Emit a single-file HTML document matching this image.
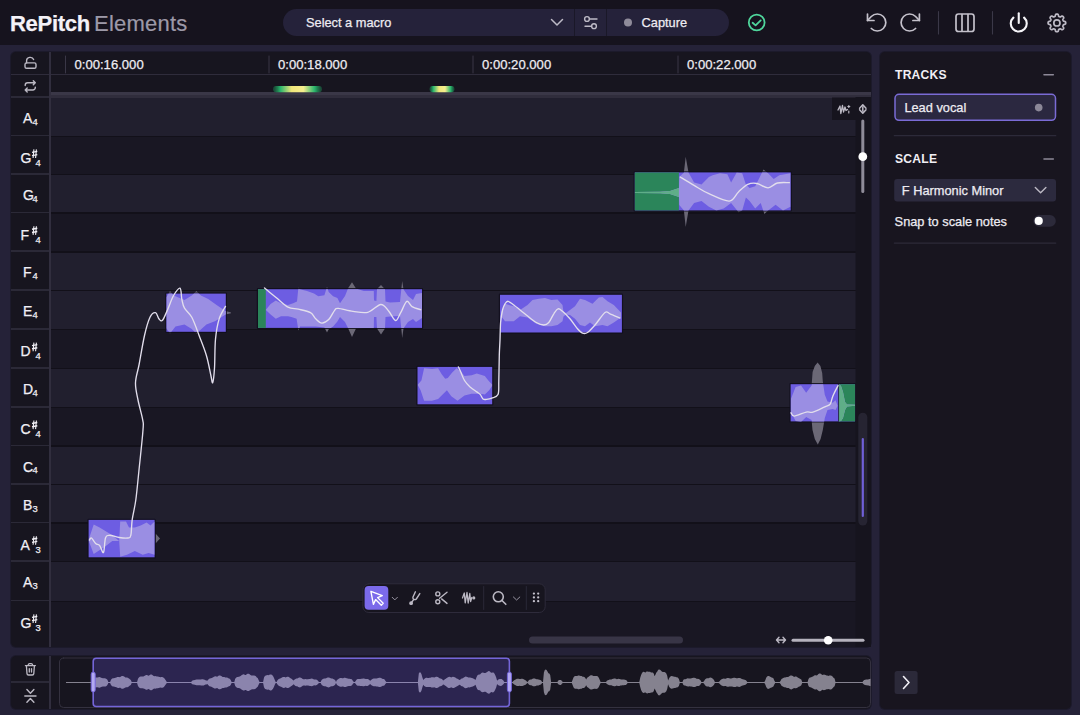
<!DOCTYPE html><html><head><meta charset="utf-8"><style>*{margin:0;padding:0;box-sizing:border-box}
html,body{width:1080px;height:715px;overflow:hidden;background:#252238;font-family:"Liberation Sans",sans-serif;color:#ece9f3}
div{-webkit-text-stroke:0.25px currentColor}
.a{position:absolute}
#hdr{left:0;top:0;width:1080px;height:45px;background:#16131e}
#logo{left:10px;top:10.5px;font-size:22px;line-height:26px;white-space:nowrap;letter-spacing:-0.3px}
#logo b{color:#f4f2f8}
#logo span{color:#9d99a8;font-weight:normal;letter-spacing:0.3px}
#pill{left:283px;top:9px;width:446px;height:27px;background:#25223a;border-radius:14px}
.t125{font-size:12.8px;line-height:14px;white-space:nowrap}
.key{position:absolute;left:0;width:38px;color:#f1eff5;font-size:13.5px;line-height:14px;white-space:nowrap}
.key i{font-style:normal;position:absolute}
.lbl{color:#f1eff5;line-height:18px;white-space:nowrap;-webkit-text-stroke:0.25px #f1eff5}
.tl{position:absolute;top:58px;font-size:13.1px;line-height:14px;color:#efedf3;white-space:nowrap}
</style></head><body>
<div id="hdr" class="a">
  <div id="logo" class="a"><b>RePitch</b></div><div class="a" style="left:94px;top:10.5px;font-size:22px;line-height:26px;white-space:nowrap;color:#9d99a8;letter-spacing:0.22px;-webkit-text-stroke:0.2px #9d99a8">Elements</div>
  <div id="pill" class="a"></div>
  <div class="a t125" style="left:306px;top:16px;color:#eeecf2">Select a macro</div>
  <div class="a" style="left:574px;top:9px;width:1px;height:27px;background:#1a1828"></div>
  <div class="a" style="left:606px;top:9px;width:1px;height:27px;background:#1a1828"></div>
  <div class="a t125" style="left:641.6px;top:16px;color:#eeecf2">Capture</div>
  <svg class="a" style="left:0;top:0" width="1080" height="45" viewBox="0 0 1080 45" fill="none" stroke-linecap="round" stroke-linejoin="round">
    <path d="M551.5 19.5 L557 25 L562.5 19.5" stroke="#bdbac6" stroke-width="1.5"/>
    <g stroke="#bdbac6" stroke-width="1.4">
      <circle cx="587" cy="19" r="2.4"/><path d="M589.4 19 H597"/>
      <circle cx="594" cy="26.2" r="2.4"/><path d="M585 26.2 H591.6"/>
    </g>
    <circle cx="628" cy="22.5" r="4" fill="#8f8b9a" stroke="none"/>
    <g stroke="#4fd69c" stroke-width="1.8">
      <circle cx="756.7" cy="22.5" r="7.9"/>
      <path d="M752.6 22.8 L755.6 25.4 L760.7 20.4"/>
    </g>
    <g stroke="#c4c1cb" stroke-width="1.7">
      <path d="M867.5 14 V20.5 H874"/>
      <path d="M867.5 20.5 L871.3 16.5 A8.5 8.5 0 1 1 871.3 28.5"/>
      <path d="M919.4 14 V20.5 H912.9"/>
      <path d="M919.4 20.5 L915.6 16.5 A8.5 8.5 0 1 0 915.6 28.5"/>
      <rect x="956" y="14" width="18" height="17.5" rx="2.5"/>
      <path d="M962 14.5 V31 M968 14.5 V31"/>
    </g>
    <path d="M938.5 11.5 V34 M992.5 11.5 V34" stroke="#3b3848" stroke-width="1.1"/>
    <g stroke="#f6f5f9" stroke-width="2.1">
      <path d="M1018.75 13.2 V23"/>
      <path d="M1013.4 17.6 A8 8 0 1 0 1024.1 17.6"/>
    </g>
    <g stroke="#bdbac5" stroke-width="1.7" transform="translate(1056.9 22.9)">
      <path d="M0.00 -8.80 L0.35 -8.79 L0.69 -8.74 L1.02 -8.62 L1.31 -8.28 L1.51 -7.60 L1.66 -6.92 L1.85 -6.57 L2.08 -6.40 L2.32 -6.29 L2.56 -6.19 L2.81 -6.09 L3.06 -6.00 L3.33 -5.95 L3.72 -6.07 L4.31 -6.44 L4.93 -6.78 L5.37 -6.81 L5.69 -6.67 L5.97 -6.46 L6.22 -6.22 L6.46 -5.97 L6.67 -5.69 L6.81 -5.37 L6.78 -4.93 L6.44 -4.31 L6.07 -3.72 L5.95 -3.33 L6.00 -3.06 L6.09 -2.81 L6.19 -2.56 L6.29 -2.32 L6.40 -2.08 L6.57 -1.85 L6.92 -1.66 L7.60 -1.51 L8.28 -1.31 L8.62 -1.02 L8.74 -0.69 L8.79 -0.35 L8.80 0.00 L8.79 0.35 L8.74 0.69 L8.62 1.02 L8.28 1.31 L7.60 1.51 L6.92 1.66 L6.57 1.85 L6.40 2.08 L6.29 2.32 L6.19 2.56 L6.09 2.81 L6.00 3.06 L5.95 3.33 L6.07 3.72 L6.44 4.31 L6.78 4.93 L6.81 5.37 L6.67 5.69 L6.46 5.97 L6.22 6.22 L5.97 6.46 L5.69 6.67 L5.37 6.81 L4.93 6.78 L4.31 6.44 L3.72 6.07 L3.33 5.95 L3.06 6.00 L2.81 6.09 L2.56 6.19 L2.32 6.29 L2.08 6.40 L1.85 6.57 L1.66 6.92 L1.51 7.60 L1.31 8.28 L1.02 8.62 L0.69 8.74 L0.35 8.79 L0.00 8.80 L-0.35 8.79 L-0.69 8.74 L-1.02 8.62 L-1.31 8.28 L-1.51 7.60 L-1.66 6.92 L-1.85 6.57 L-2.08 6.40 L-2.32 6.29 L-2.56 6.19 L-2.81 6.09 L-3.06 6.00 L-3.33 5.95 L-3.72 6.07 L-4.31 6.44 L-4.93 6.78 L-5.37 6.81 L-5.69 6.67 L-5.97 6.46 L-6.22 6.22 L-6.46 5.97 L-6.67 5.69 L-6.81 5.37 L-6.78 4.93 L-6.44 4.31 L-6.07 3.72 L-5.95 3.33 L-6.00 3.06 L-6.09 2.81 L-6.19 2.56 L-6.29 2.32 L-6.40 2.08 L-6.57 1.85 L-6.92 1.66 L-7.60 1.51 L-8.28 1.31 L-8.62 1.02 L-8.74 0.69 L-8.79 0.35 L-8.80 0.00 L-8.79 -0.35 L-8.74 -0.69 L-8.62 -1.02 L-8.28 -1.31 L-7.60 -1.51 L-6.92 -1.66 L-6.57 -1.85 L-6.40 -2.08 L-6.29 -2.32 L-6.19 -2.56 L-6.09 -2.81 L-6.00 -3.06 L-5.95 -3.33 L-6.07 -3.72 L-6.44 -4.31 L-6.78 -4.93 L-6.81 -5.37 L-6.67 -5.69 L-6.46 -5.97 L-6.22 -6.22 L-5.97 -6.46 L-5.69 -6.67 L-5.37 -6.81 L-4.93 -6.78 L-4.31 -6.44 L-3.72 -6.07 L-3.33 -5.95 L-3.06 -6.00 L-2.81 -6.09 L-2.56 -6.19 L-2.32 -6.29 L-2.08 -6.40 L-1.85 -6.57 L-1.66 -6.92 L-1.51 -7.60 L-1.31 -8.28 L-1.02 -8.62 L-0.69 -8.74 L-0.35 -8.79Z"/>
      <circle cx="0" cy="0" r="3.1"/>
    </g>
  </svg>
</div>

<div class="a" style="left:11px;top:52px;width:859.5px;height:595px;background:#17151f;border-radius:5px;overflow:hidden;box-shadow:0 0 0 1px #1c1a2b">
<div class="a" style="left:40px;top:45.50px;width:805px;height:38.80px;background:#211f2e"></div>
<div class="a" style="left:40px;top:44.70px;width:805px;height:1.6px;background:#121019"></div>
<div class="a" style="left:0;top:44.00px;width:38px;height:1.6px;background:#2b2937"></div>
<div class="a" style="left:40px;top:84.30px;width:805px;height:38.20px;background:#191723"></div>
<div class="a" style="left:40px;top:83.50px;width:805px;height:1.6px;background:#121019"></div>
<div class="a" style="left:0;top:82.80px;width:38px;height:1.6px;background:#2b2937"></div>
<div class="a" style="left:40px;top:122.50px;width:805px;height:38.70px;background:#211f2e"></div>
<div class="a" style="left:40px;top:121.70px;width:805px;height:1.6px;background:#121019"></div>
<div class="a" style="left:0;top:121.00px;width:38px;height:1.6px;background:#2b2937"></div>
<div class="a" style="left:40px;top:161.20px;width:805px;height:38.55px;background:#191723"></div>
<div class="a" style="left:40px;top:160.40px;width:805px;height:1.6px;background:#121019"></div>
<div class="a" style="left:0;top:159.70px;width:38px;height:1.6px;background:#2b2937"></div>
<div class="a" style="left:40px;top:199.75px;width:805px;height:38.85px;background:#211f2e"></div>
<div class="a" style="left:40px;top:198.95px;width:805px;height:1.6px;background:#121019"></div>
<div class="a" style="left:0;top:198.25px;width:38px;height:1.6px;background:#2b2937"></div>
<div class="a" style="left:40px;top:238.60px;width:805px;height:38.90px;background:#211f2e"></div>
<div class="a" style="left:40px;top:237.80px;width:805px;height:1.6px;background:#121019"></div>
<div class="a" style="left:0;top:237.10px;width:38px;height:1.6px;background:#2b2937"></div>
<div class="a" style="left:40px;top:277.50px;width:805px;height:39.00px;background:#191723"></div>
<div class="a" style="left:40px;top:276.70px;width:805px;height:1.6px;background:#121019"></div>
<div class="a" style="left:0;top:276.00px;width:38px;height:1.6px;background:#2b2937"></div>
<div class="a" style="left:40px;top:316.50px;width:805px;height:38.95px;background:#211f2e"></div>
<div class="a" style="left:40px;top:315.70px;width:805px;height:1.6px;background:#121019"></div>
<div class="a" style="left:0;top:315.00px;width:38px;height:1.6px;background:#2b2937"></div>
<div class="a" style="left:40px;top:355.45px;width:805px;height:38.55px;background:#191723"></div>
<div class="a" style="left:40px;top:354.65px;width:805px;height:1.6px;background:#121019"></div>
<div class="a" style="left:0;top:353.95px;width:38px;height:1.6px;background:#2b2937"></div>
<div class="a" style="left:40px;top:394.00px;width:805px;height:38.50px;background:#211f2e"></div>
<div class="a" style="left:40px;top:393.20px;width:805px;height:1.6px;background:#121019"></div>
<div class="a" style="left:0;top:392.50px;width:38px;height:1.6px;background:#2b2937"></div>
<div class="a" style="left:40px;top:432.50px;width:805px;height:38.60px;background:#211f2e"></div>
<div class="a" style="left:40px;top:431.70px;width:805px;height:1.6px;background:#121019"></div>
<div class="a" style="left:0;top:431.00px;width:38px;height:1.6px;background:#2b2937"></div>
<div class="a" style="left:40px;top:471.10px;width:805px;height:38.60px;background:#191723"></div>
<div class="a" style="left:40px;top:470.30px;width:805px;height:1.6px;background:#121019"></div>
<div class="a" style="left:0;top:469.60px;width:38px;height:1.6px;background:#2b2937"></div>
<div class="a" style="left:40px;top:509.70px;width:805px;height:39.60px;background:#211f2e"></div>
<div class="a" style="left:40px;top:508.90px;width:805px;height:1.6px;background:#121019"></div>
<div class="a" style="left:0;top:508.20px;width:38px;height:1.6px;background:#2b2937"></div>
<div class="a" style="left:40px;top:549.30px;width:805px;height:45.70px;background:#191723"></div>
<div class="a" style="left:40px;top:548.50px;width:805px;height:1.6px;background:#121019"></div>
<div class="a" style="left:0;top:547.80px;width:38px;height:1.6px;background:#2b2937"></div>
<div class="a" style="left:0;top:21.6px;width:860px;height:1.5px;background:#2f2c3b"></div>
<div class="a" style="left:40px;top:39.5px;width:820px;height:3.5px;background:#3a3747"></div>
<div class="a" style="left:40px;top:43px;width:820px;height:2.5px;background:#302d3c"></div>
<div class="a" style="left:38px;top:0;width:2.2px;height:595px;background:#312e3e"></div>
</div>
<div class="a lbl" style="left:23.0px;top:109.1px;font-size:14px">A</div>
<div class="a lbl" style="left:32.6px;top:112.5px;font-size:9.4px">4</div>
<div class="a lbl" style="left:20.6px;top:149.2px;font-size:14px">G</div>
<div class="a lbl" style="left:35.6px;top:154.1px;font-size:9.4px">4</div>
<div class="a lbl" style="left:23.0px;top:186.1px;font-size:14px">G</div>
<div class="a lbl" style="left:32.6px;top:189.5px;font-size:9.4px">4</div>
<div class="a lbl" style="left:20.6px;top:226.1px;font-size:14px">F</div>
<div class="a lbl" style="left:35.6px;top:231.0px;font-size:9.4px">4</div>
<div class="a lbl" style="left:23.0px;top:263.3px;font-size:14px">F</div>
<div class="a lbl" style="left:32.6px;top:266.7px;font-size:9.4px">4</div>
<div class="a lbl" style="left:23.0px;top:302.2px;font-size:14px">E</div>
<div class="a lbl" style="left:32.6px;top:305.6px;font-size:9.4px">4</div>
<div class="a lbl" style="left:20.6px;top:342.4px;font-size:14px">D</div>
<div class="a lbl" style="left:35.6px;top:347.3px;font-size:9.4px">4</div>
<div class="a lbl" style="left:23.0px;top:380.1px;font-size:14px">D</div>
<div class="a lbl" style="left:32.6px;top:383.5px;font-size:9.4px">4</div>
<div class="a lbl" style="left:20.6px;top:420.3px;font-size:14px">C</div>
<div class="a lbl" style="left:35.6px;top:425.2px;font-size:9.4px">4</div>
<div class="a lbl" style="left:23.0px;top:457.6px;font-size:14px">C</div>
<div class="a lbl" style="left:32.6px;top:461.0px;font-size:9.4px">4</div>
<div class="a lbl" style="left:23.0px;top:496.1px;font-size:14px">B</div>
<div class="a lbl" style="left:32.6px;top:499.5px;font-size:9.4px">3</div>
<div class="a lbl" style="left:20.6px;top:536.0px;font-size:14px">A</div>
<div class="a lbl" style="left:35.6px;top:540.9px;font-size:9.4px">3</div>
<div class="a lbl" style="left:23.0px;top:573.3px;font-size:14px">A</div>
<div class="a lbl" style="left:32.6px;top:576.7px;font-size:9.4px">3</div>
<div class="a lbl" style="left:20.6px;top:614.2px;font-size:14px">G</div>
<div class="a lbl" style="left:35.6px;top:619.1px;font-size:9.4px">3</div>
<div class="tl" style="left:74.5px">0:00:16.000</div>
<div class="tl" style="left:278.0px">0:00:18.000</div>
<div class="tl" style="left:482.0px">0:00:20.000</div>
<div class="tl" style="left:687.0px">0:00:22.000</div>
<svg class="a" style="left:0;top:0" width="1080" height="715" viewBox="0 0 1080 715" fill="none" stroke-linecap="round" stroke-linejoin="round">
<path d="M65.5 56 V73" stroke="#3a3747" stroke-width="1"/>
<path d="M269.0 56 V73" stroke="#3a3747" stroke-width="1"/>
<path d="M473.0 56 V73" stroke="#3a3747" stroke-width="1"/>
<path d="M678.0 56 V73" stroke="#3a3747" stroke-width="1"/>
<defs><linearGradient id="glow" x1="0" x2="1" y1="0" y2="0"><stop offset="0" stop-color="#1a6b45" stop-opacity="0.5"/><stop offset="0.15" stop-color="#28b56c"/><stop offset="0.38" stop-color="#f0e67a"/><stop offset="0.62" stop-color="#f6ee8e"/><stop offset="0.85" stop-color="#28b56c"/><stop offset="1" stop-color="#1a6b45" stop-opacity="0.5"/></linearGradient>
<filter id="bl" x="-20%" y="-100%" width="140%" height="300%"><feGaussianBlur stdDeviation="0.55"/></filter></defs>
<rect x="273" y="86" width="49" height="6.3" rx="3" fill="url(#glow)" filter="url(#bl)"/>
<rect x="429.5" y="86" width="25" height="6.3" rx="3" fill="url(#glow)" filter="url(#bl)"/>
<g stroke="#bcb9c4" stroke-width="1.4"><rect x="25" y="62.9" width="11" height="5.4" rx="1.6"/><path d="M26.6 62.9 V60.6 A3.6 3.3 0 0 1 33.6 59.6"/></g>
<g stroke="#bcb9c4" stroke-width="1.4"><path d="M25.2 85.6 V85.2 A2.4 2.4 0 0 1 27.6 82.8 H35.3 M33.3 80.8 L35.3 82.8 L33.3 84.8"/><path d="M35.3 87.2 V87.6 A2.4 2.4 0 0 1 32.9 90 H25.2 M27.2 88 L25.2 90 L27.2 92"/></g>
<defs>
<clipPath id="nc0"><rect x="88.6" y="519.9" width="66.0" height="37.4"/></clipPath>
<clipPath id="nc1"><rect x="166.4" y="293.6" width="59.4" height="38.2"/></clipPath>
<clipPath id="nc2"><rect x="258.0" y="289.2" width="164.0" height="38.7"/></clipPath>
<clipPath id="nc3"><rect x="417.5" y="366.9" width="74.7" height="37.4"/></clipPath>
<clipPath id="nc4"><rect x="500.0" y="294.8" width="121.9" height="37.7"/></clipPath>
<clipPath id="nc5"><rect x="634.8" y="172.4" width="155.9" height="38.0"/></clipPath>
<clipPath id="nc6"><rect x="790.6" y="384.2" width="64.5" height="37.2"/></clipPath>
</defs>
<path d="M155.5 533.5 L160 538.5 L155.5 543.5 Z" fill="#6b6876"/>
<path d="M88.8 539.2 L93.7 524.5 L99.6 527.4 L107.4 532.3 L112.3 535.3 L119.2 541.1 L120.2 521.5 L126.0 521.5 L129.0 527.4 L134.8 527.4 L140.7 525.5 L146.6 522.5 L150.5 525.5 L154.6 521.5 L154.6 554.8 L148.6 552.9 L142.7 554.8 L134.8 550.9 L127.0 554.8 L120.2 556.8 L119.2 541.1 L112.3 541.1 L104.5 547.0 L93.7 553.9 L88.8 541.0Z" fill="#6b6876"/>
<path d="M166.4 297.3 L170.0 290.9 L173.6 295.5 L184.5 300.0 L191.8 295.5 L196.4 290.9 L200.9 295.5 L208.2 299.1 L217.3 305.5 L225.5 310.9 L231.0 312.4 L231.0 313.3 L225.5 314.5 L215.5 320.9 L206.4 324.5 L196.4 333.6 L191.8 329.1 L184.5 324.5 L175.5 326.4 L170.0 333.6 L166.4 328.2Z" fill="#6b6876"/>
<path d="M265.9 309.7 L270.6 304.0 L275.8 300.6 L281.0 303.2 L288.0 304.9 L293.2 303.2 L297.0 301.4 L298.4 287.5 L300.1 289.3 L307.0 291.0 L314.0 293.6 L318.3 296.2 L324.4 295.3 L327.0 286.7 L328.7 291.9 L333.1 296.2 L337.4 297.9 L340.0 303.2 L345.0 296.0 L348.2 288.0 L352.0 282.3 L356.0 288.5 L363.8 291.0 L373.8 291.0 L374.0 300.5 L376.4 301.0 L377.0 289.0 L381.0 285.0 L385.0 289.2 L385.5 301.4 L390.0 302.5 L400.0 302.0 L401.3 289.2 L402.2 281.0 L403.5 289.2 L408.0 296.0 L413.0 300.0 L416.0 294.0 L422.0 293.0 L422.0 318.0 L416.0 322.0 L413.0 319.0 L408.0 322.0 L403.5 328.4 L402.2 338.0 L401.3 328.4 L400.0 316.0 L390.0 316.5 L385.5 317.0 L385.0 328.4 L381.0 334.5 L377.0 328.4 L376.4 317.0 L374.0 317.0 L373.8 327.9 L363.8 327.9 L356.0 328.4 L352.0 337.0 L348.2 328.4 L345.0 322.0 L340.0 317.0 L337.4 321.4 L333.1 326.6 L328.7 329.2 L327.0 332.6 L324.4 327.4 L315.7 326.6 L307.0 326.6 L300.1 326.6 L298.4 330.5 L296.6 318.8 L291.4 317.0 L288.0 316.2 L281.0 316.2 L275.8 318.8 L270.6 314.4 L265.9 310.1Z" fill="#6b6876"/>
<path d="M417.9 384.5 L421.4 380.5 L424.1 368.2 L432.0 369.1 L438.1 368.2 L441.7 374.3 L445.2 378.7 L447.8 377.9 L452.2 372.6 L456.6 368.2 L461.0 371.7 L464.5 376.1 L471.6 375.2 L476.8 373.5 L484.8 376.1 L489.2 381.4 L492.2 384.5 L492.2 385.8 L489.2 390.2 L484.8 394.6 L480.4 393.7 L471.6 393.7 L464.5 395.5 L457.5 400.7 L451.3 396.3 L446.9 390.2 L443.4 393.7 L438.1 399.0 L432.0 400.7 L424.1 400.7 L420.6 390.2 L417.9 385.3Z" fill="#6b6876"/>
<path d="M501.2 312.5 L505.0 303.8 L513.8 306.3 L520.0 310.0 L527.5 305.0 L532.5 300.0 L538.8 298.8 L545.0 298.1 L551.3 300.0 L557.5 299.4 L562.5 305.0 L563.5 312.0 L566.0 313.0 L570.0 310.0 L575.0 306.3 L580.0 298.8 L585.0 300.0 L592.5 303.8 L598.8 297.5 L602.5 296.9 L607.5 301.3 L613.8 305.0 L621.0 312.5 L621.0 317.5 L613.8 322.5 L607.5 326.3 L602.5 325.0 L595.0 326.3 L590.0 322.5 L585.0 326.3 L580.0 325.0 L575.0 318.8 L570.0 315.0 L566.0 314.5 L563.5 316.5 L562.5 321.3 L557.5 325.0 L551.3 326.3 L545.0 326.3 L536.3 323.8 L527.5 317.5 L520.0 316.3 L513.8 321.3 L505.0 321.3 L501.2 316.3Z" fill="#6b6876"/>
<path d="M634.8 192.0 L660.0 191.8 L670.0 191.0 L679.0 188.0 L679.3 177.0 L683.9 172.4 L685.7 156.7 L688.5 172.4 L694.1 182.6 L701.5 184.4 L708.9 177.0 L712.6 175.2 L720.0 173.3 L727.4 174.3 L731.1 182.6 L736.7 172.4 L742.2 173.3 L745.9 184.4 L749.6 188.1 L755.2 186.3 L760.7 175.2 L763.5 169.6 L768.1 173.3 L773.7 178.9 L779.3 175.2 L790.4 173.3 L790.4 206.7 L783.0 210.4 L775.6 204.8 L768.1 210.4 L764.4 214.1 L760.7 203.0 L755.2 208.5 L749.6 201.1 L745.9 197.4 L742.2 210.4 L738.5 212.2 L731.1 203.0 L723.7 208.5 L716.3 210.4 L708.9 206.7 L701.5 201.1 L694.1 203.0 L688.5 210.4 L685.7 227.0 L683.9 210.4 L679.3 205.0 L679.0 197.0 L670.0 194.0 L660.0 193.2 L634.8 193.0Z" fill="#6b6876"/>
<path d="M791.0 398.8 L795.6 386.9 L801.0 385.5 L806.2 392.8 L811.6 385.5 L812.6 372.0 L814.8 366.0 L817.6 362.5 L820.4 366.0 L822.2 373.0 L822.8 381.6 L824.8 394.8 L827.5 401.5 L832.8 402.8 L835.5 400.2 L837.5 405.5 L837.5 406.0 L835.5 410.0 L832.8 409.0 L827.5 410.0 L824.8 418.0 L822.8 430.0 L820.6 439.0 L817.8 444.5 L814.8 439.0 L812.5 430.0 L811.6 420.0 L806.2 417.0 L801.0 422.0 L795.6 421.0 L791.0 412.0Z" fill="#6b6876"/>
<path d="M839.0 384.2 L841.0 386.0 L843.0 392.0 L845.0 402.0 L847.0 404.5 L855.0 404.8 L855.0 405.8 L847.0 406.5 L845.0 410.0 L843.0 418.0 L841.0 421.0 L839.0 421.4Z" fill="#6b6876"/>
<rect x="88.6" y="519.9" width="66.0" height="37.4" fill="none" stroke="#110e1c" stroke-width="2.4" stroke-opacity="0.85"/>
<rect x="88.6" y="519.9" width="66.0" height="37.4" fill="#6d5de2"/>
<rect x="166.4" y="293.6" width="59.4" height="38.2" fill="none" stroke="#110e1c" stroke-width="2.4" stroke-opacity="0.85"/>
<rect x="166.4" y="293.6" width="59.4" height="38.2" fill="#6d5de2"/>
<rect x="258.0" y="289.2" width="164.0" height="38.7" fill="none" stroke="#110e1c" stroke-width="2.4" stroke-opacity="0.85"/>
<rect x="258.0" y="289.2" width="164.0" height="38.7" fill="#6d5de2"/>
<rect x="258.0" y="289.2" width="7.8" height="38.7" fill="#2b855a"/>
<rect x="417.5" y="366.9" width="74.7" height="37.4" fill="none" stroke="#110e1c" stroke-width="2.4" stroke-opacity="0.85"/>
<rect x="417.5" y="366.9" width="74.7" height="37.4" fill="#6d5de2"/>
<rect x="500.0" y="294.8" width="121.9" height="37.7" fill="none" stroke="#110e1c" stroke-width="2.4" stroke-opacity="0.85"/>
<rect x="500.0" y="294.8" width="121.9" height="37.7" fill="#6d5de2"/>
<rect x="634.8" y="172.4" width="155.9" height="38.0" fill="none" stroke="#110e1c" stroke-width="2.4" stroke-opacity="0.85"/>
<rect x="634.8" y="172.4" width="155.9" height="38.0" fill="#6d5de2"/>
<rect x="634.8" y="172.4" width="44.1" height="38.0" fill="#2b855a"/>
<rect x="790.6" y="384.2" width="64.5" height="37.2" fill="none" stroke="#110e1c" stroke-width="2.4" stroke-opacity="0.85"/>
<rect x="790.6" y="384.2" width="64.5" height="37.2" fill="#6d5de2"/>
<rect x="838.6" y="384.2" width="16.5" height="37.2" fill="#2b855a"/>
<path d="M88.8 539.2 L93.7 524.5 L99.6 527.4 L107.4 532.3 L112.3 535.3 L119.2 541.1 L120.2 521.5 L126.0 521.5 L129.0 527.4 L134.8 527.4 L140.7 525.5 L146.6 522.5 L150.5 525.5 L154.6 521.5 L154.6 554.8 L148.6 552.9 L142.7 554.8 L134.8 550.9 L127.0 554.8 L120.2 556.8 L119.2 541.1 L112.3 541.1 L104.5 547.0 L93.7 553.9 L88.8 541.0Z" fill="#9a8ee3" clip-path="url(#nc0)"/>
<path d="M166.4 297.3 L170.0 290.9 L173.6 295.5 L184.5 300.0 L191.8 295.5 L196.4 290.9 L200.9 295.5 L208.2 299.1 L217.3 305.5 L225.5 310.9 L231.0 312.4 L231.0 313.3 L225.5 314.5 L215.5 320.9 L206.4 324.5 L196.4 333.6 L191.8 329.1 L184.5 324.5 L175.5 326.4 L170.0 333.6 L166.4 328.2Z" fill="#9a8ee3" clip-path="url(#nc1)"/>
<path d="M265.9 309.7 L270.6 304.0 L275.8 300.6 L281.0 303.2 L288.0 304.9 L293.2 303.2 L297.0 301.4 L298.4 287.5 L300.1 289.3 L307.0 291.0 L314.0 293.6 L318.3 296.2 L324.4 295.3 L327.0 286.7 L328.7 291.9 L333.1 296.2 L337.4 297.9 L340.0 303.2 L345.0 296.0 L348.2 288.0 L352.0 282.3 L356.0 288.5 L363.8 291.0 L373.8 291.0 L374.0 300.5 L376.4 301.0 L377.0 289.0 L381.0 285.0 L385.0 289.2 L385.5 301.4 L390.0 302.5 L400.0 302.0 L401.3 289.2 L402.2 281.0 L403.5 289.2 L408.0 296.0 L413.0 300.0 L416.0 294.0 L422.0 293.0 L422.0 318.0 L416.0 322.0 L413.0 319.0 L408.0 322.0 L403.5 328.4 L402.2 338.0 L401.3 328.4 L400.0 316.0 L390.0 316.5 L385.5 317.0 L385.0 328.4 L381.0 334.5 L377.0 328.4 L376.4 317.0 L374.0 317.0 L373.8 327.9 L363.8 327.9 L356.0 328.4 L352.0 337.0 L348.2 328.4 L345.0 322.0 L340.0 317.0 L337.4 321.4 L333.1 326.6 L328.7 329.2 L327.0 332.6 L324.4 327.4 L315.7 326.6 L307.0 326.6 L300.1 326.6 L298.4 330.5 L296.6 318.8 L291.4 317.0 L288.0 316.2 L281.0 316.2 L275.8 318.8 L270.6 314.4 L265.9 310.1Z" fill="#9a8ee3" clip-path="url(#nc2)"/>
<path d="M417.9 384.5 L421.4 380.5 L424.1 368.2 L432.0 369.1 L438.1 368.2 L441.7 374.3 L445.2 378.7 L447.8 377.9 L452.2 372.6 L456.6 368.2 L461.0 371.7 L464.5 376.1 L471.6 375.2 L476.8 373.5 L484.8 376.1 L489.2 381.4 L492.2 384.5 L492.2 385.8 L489.2 390.2 L484.8 394.6 L480.4 393.7 L471.6 393.7 L464.5 395.5 L457.5 400.7 L451.3 396.3 L446.9 390.2 L443.4 393.7 L438.1 399.0 L432.0 400.7 L424.1 400.7 L420.6 390.2 L417.9 385.3Z" fill="#9a8ee3" clip-path="url(#nc3)"/>
<path d="M501.2 312.5 L505.0 303.8 L513.8 306.3 L520.0 310.0 L527.5 305.0 L532.5 300.0 L538.8 298.8 L545.0 298.1 L551.3 300.0 L557.5 299.4 L562.5 305.0 L563.5 312.0 L566.0 313.0 L570.0 310.0 L575.0 306.3 L580.0 298.8 L585.0 300.0 L592.5 303.8 L598.8 297.5 L602.5 296.9 L607.5 301.3 L613.8 305.0 L621.0 312.5 L621.0 317.5 L613.8 322.5 L607.5 326.3 L602.5 325.0 L595.0 326.3 L590.0 322.5 L585.0 326.3 L580.0 325.0 L575.0 318.8 L570.0 315.0 L566.0 314.5 L563.5 316.5 L562.5 321.3 L557.5 325.0 L551.3 326.3 L545.0 326.3 L536.3 323.8 L527.5 317.5 L520.0 316.3 L513.8 321.3 L505.0 321.3 L501.2 316.3Z" fill="#9a8ee3" clip-path="url(#nc4)"/>
<path d="M634.8 192.0 L660.0 191.8 L670.0 191.0 L679.0 188.0 L679.3 177.0 L683.9 172.4 L685.7 156.7 L688.5 172.4 L694.1 182.6 L701.5 184.4 L708.9 177.0 L712.6 175.2 L720.0 173.3 L727.4 174.3 L731.1 182.6 L736.7 172.4 L742.2 173.3 L745.9 184.4 L749.6 188.1 L755.2 186.3 L760.7 175.2 L763.5 169.6 L768.1 173.3 L773.7 178.9 L779.3 175.2 L790.4 173.3 L790.4 206.7 L783.0 210.4 L775.6 204.8 L768.1 210.4 L764.4 214.1 L760.7 203.0 L755.2 208.5 L749.6 201.1 L745.9 197.4 L742.2 210.4 L738.5 212.2 L731.1 203.0 L723.7 208.5 L716.3 210.4 L708.9 206.7 L701.5 201.1 L694.1 203.0 L688.5 210.4 L685.7 227.0 L683.9 210.4 L679.3 205.0 L679.0 197.0 L670.0 194.0 L660.0 193.2 L634.8 193.0Z" fill="#9a8ee3" clip-path="url(#nc5)"/>
<path d="M791.0 398.8 L795.6 386.9 L801.0 385.5 L806.2 392.8 L811.6 385.5 L812.6 372.0 L814.8 366.0 L817.6 362.5 L820.4 366.0 L822.2 373.0 L822.8 381.6 L824.8 394.8 L827.5 401.5 L832.8 402.8 L835.5 400.2 L837.5 405.5 L837.5 406.0 L835.5 410.0 L832.8 409.0 L827.5 410.0 L824.8 418.0 L822.8 430.0 L820.6 439.0 L817.8 444.5 L814.8 439.0 L812.5 430.0 L811.6 420.0 L806.2 417.0 L801.0 422.0 L795.6 421.0 L791.0 412.0Z" fill="#9a8ee3" clip-path="url(#nc6)"/>
<path d="M839.0 384.2 L841.0 386.0 L843.0 392.0 L845.0 402.0 L847.0 404.5 L855.0 404.8 L855.0 405.8 L847.0 406.5 L845.0 410.0 L843.0 418.0 L841.0 421.0 L839.0 421.4Z" fill="#9a8ee3" clip-path="url(#nc6)"/>
<clipPath id="gc2_0"><rect x="258.0" y="289.2" width="7.8" height="38.7"/></clipPath>
<path d="M265.9 309.7 L270.6 304.0 L275.8 300.6 L281.0 303.2 L288.0 304.9 L293.2 303.2 L297.0 301.4 L298.4 287.5 L300.1 289.3 L307.0 291.0 L314.0 293.6 L318.3 296.2 L324.4 295.3 L327.0 286.7 L328.7 291.9 L333.1 296.2 L337.4 297.9 L340.0 303.2 L345.0 296.0 L348.2 288.0 L352.0 282.3 L356.0 288.5 L363.8 291.0 L373.8 291.0 L374.0 300.5 L376.4 301.0 L377.0 289.0 L381.0 285.0 L385.0 289.2 L385.5 301.4 L390.0 302.5 L400.0 302.0 L401.3 289.2 L402.2 281.0 L403.5 289.2 L408.0 296.0 L413.0 300.0 L416.0 294.0 L422.0 293.0 L422.0 318.0 L416.0 322.0 L413.0 319.0 L408.0 322.0 L403.5 328.4 L402.2 338.0 L401.3 328.4 L400.0 316.0 L390.0 316.5 L385.5 317.0 L385.0 328.4 L381.0 334.5 L377.0 328.4 L376.4 317.0 L374.0 317.0 L373.8 327.9 L363.8 327.9 L356.0 328.4 L352.0 337.0 L348.2 328.4 L345.0 322.0 L340.0 317.0 L337.4 321.4 L333.1 326.6 L328.7 329.2 L327.0 332.6 L324.4 327.4 L315.7 326.6 L307.0 326.6 L300.1 326.6 L298.4 330.5 L296.6 318.8 L291.4 317.0 L288.0 316.2 L281.0 316.2 L275.8 318.8 L270.6 314.4 L265.9 310.1Z" fill="#5fae88" clip-path="url(#gc2_0)"/>
<clipPath id="gc5_0"><rect x="634.8" y="172.4" width="44.1" height="38.0"/></clipPath>
<path d="M634.8 192.0 L660.0 191.8 L670.0 191.0 L679.0 188.0 L679.3 177.0 L683.9 172.4 L685.7 156.7 L688.5 172.4 L694.1 182.6 L701.5 184.4 L708.9 177.0 L712.6 175.2 L720.0 173.3 L727.4 174.3 L731.1 182.6 L736.7 172.4 L742.2 173.3 L745.9 184.4 L749.6 188.1 L755.2 186.3 L760.7 175.2 L763.5 169.6 L768.1 173.3 L773.7 178.9 L779.3 175.2 L790.4 173.3 L790.4 206.7 L783.0 210.4 L775.6 204.8 L768.1 210.4 L764.4 214.1 L760.7 203.0 L755.2 208.5 L749.6 201.1 L745.9 197.4 L742.2 210.4 L738.5 212.2 L731.1 203.0 L723.7 208.5 L716.3 210.4 L708.9 206.7 L701.5 201.1 L694.1 203.0 L688.5 210.4 L685.7 227.0 L683.9 210.4 L679.3 205.0 L679.0 197.0 L670.0 194.0 L660.0 193.2 L634.8 193.0Z" fill="#5fae88" clip-path="url(#gc5_0)"/>
<clipPath id="gc6_0"><rect x="838.6" y="384.2" width="16.5" height="37.2"/></clipPath>
<path d="M791.0 398.8 L795.6 386.9 L801.0 385.5 L806.2 392.8 L811.6 385.5 L812.6 372.0 L814.8 366.0 L817.6 362.5 L820.4 366.0 L822.2 373.0 L822.8 381.6 L824.8 394.8 L827.5 401.5 L832.8 402.8 L835.5 400.2 L837.5 405.5 L837.5 406.0 L835.5 410.0 L832.8 409.0 L827.5 410.0 L824.8 418.0 L822.8 430.0 L820.6 439.0 L817.8 444.5 L814.8 439.0 L812.5 430.0 L811.6 420.0 L806.2 417.0 L801.0 422.0 L795.6 421.0 L791.0 412.0Z" fill="#5fae88" clip-path="url(#gc6_0)"/>
<path d="M839.0 384.2 L841.0 386.0 L843.0 392.0 L845.0 402.0 L847.0 404.5 L855.0 404.8 L855.0 405.8 L847.0 406.5 L845.0 410.0 L843.0 418.0 L841.0 421.0 L839.0 421.4Z" fill="#5fae88" clip-path="url(#gc6_0)"/>
<path d="M838.6 384.4 V421.2" stroke="#1d1838" stroke-width="1" stroke-opacity="0.8"/>
<path d="M89.5 540.0 C89.8 539.7 90.5 537.4 91.5 538.0 C92.5 538.6 94.4 542.2 95.7 543.5 C97.0 544.8 98.3 544.0 99.6 545.5 C100.9 547.0 102.5 553.8 103.5 552.5 C104.5 551.2 104.5 540.9 105.5 538.0 C106.5 535.1 107.1 535.4 109.4 535.3 C111.7 535.2 116.1 537.0 119.2 537.5 C122.3 538.0 126.0 538.4 128.0 538.0 C129.9 537.6 130.2 538.1 130.9 535.0 C131.6 531.9 131.4 525.4 132.2 519.6 C133.0 513.8 134.7 508.1 135.8 500.0 C136.9 491.9 137.7 482.7 138.9 471.0 C140.1 459.3 142.4 438.5 143.0 430.0 C143.6 421.5 143.5 424.9 142.7 419.9 C141.9 414.9 139.2 406.2 138.0 400.0 C136.8 393.8 135.3 388.6 135.5 382.7 C135.7 376.8 137.6 372.4 139.1 364.5 C140.6 356.6 142.7 343.4 144.5 335.5 C146.3 327.6 148.2 321.1 150.0 317.3 C151.8 313.5 154.0 312.4 155.5 312.7 C157.0 313.0 157.9 317.9 159.1 319.1 C160.3 320.3 161.2 321.8 162.7 320.0 C164.2 318.2 166.4 312.3 168.2 308.2 C170.0 304.1 171.6 298.8 173.6 295.5 C175.6 292.2 178.6 287.6 180.0 288.2 C181.4 288.8 181.1 295.8 181.8 299.1 C182.6 302.4 182.8 305.2 184.5 308.2 C186.2 311.2 189.4 312.8 191.8 317.3 C194.2 321.9 196.7 329.1 199.1 335.5 C201.5 341.9 204.4 348.8 206.4 355.5 C208.4 362.2 209.9 371.0 210.9 375.5 C211.9 380.0 212.1 383.9 212.7 382.7 C213.3 381.5 214.0 375.5 214.5 368.2 C215.0 360.9 214.7 347.3 215.5 339.1 C216.3 330.9 217.4 324.6 219.1 319.1 C220.8 313.7 224.4 308.5 225.5 306.4" stroke="#e2deec" stroke-width="1.35"/>
<path d="M264.5 288.0 C266.5 289.7 272.8 294.8 276.7 298.0 C280.6 301.2 284.4 305.2 288.0 307.1 C291.6 309.0 294.6 308.3 298.4 309.2 C302.1 310.1 307.6 311.1 310.5 312.7 C313.4 314.3 313.8 317.1 315.7 318.8 C317.6 320.5 319.6 323.0 321.8 323.1 C324.0 323.2 326.5 321.8 328.7 319.6 C330.9 317.4 333.2 312.0 334.8 310.1 C336.4 308.2 335.3 308.2 338.3 308.4 C341.3 308.6 348.1 310.8 353.0 311.4 C357.9 312.0 363.2 313.4 367.8 312.3 C372.4 311.2 377.3 304.7 380.8 304.5 C384.3 304.3 386.2 308.3 388.6 311.0 C391.1 313.7 393.5 320.2 395.5 320.5 C397.5 320.8 398.8 315.9 400.7 312.7 C402.6 309.5 404.9 302.4 406.8 301.4 C408.7 300.4 409.7 305.2 412.0 306.6 C414.3 308.0 419.2 309.2 420.7 309.7" stroke="#e2deec" stroke-width="1.35"/>
<path d="M458.4 366.9 C458.8 367.8 460.0 370.3 461.0 372.6 C462.0 374.9 463.0 378.1 464.5 380.5 C466.0 382.9 467.8 384.8 469.8 386.7 C471.9 388.6 475.0 390.6 476.8 391.9 C478.6 393.2 479.4 393.4 480.4 394.6 C481.4 395.8 482.0 398.2 483.0 399.0 C484.0 399.8 485.0 399.5 486.5 399.4 C488.0 399.2 489.9 398.9 491.8 398.1 C493.7 397.3 496.8 397.4 498.0 394.6 C499.2 391.8 498.6 388.0 498.8 381.4 C499.0 374.8 499.1 361.9 499.3 355.0 C499.5 348.1 499.8 345.4 500.0 340.0 C500.2 334.6 500.2 327.5 500.6 322.5 C501.0 317.5 501.8 313.1 502.5 310.0 C503.2 306.9 504.1 305.2 505.0 303.8 C505.9 302.4 506.6 301.1 508.1 301.3 C509.6 301.5 510.8 302.7 513.8 305.0 C516.8 307.3 522.5 312.1 526.3 315.0 C530.0 317.9 533.4 320.8 536.3 322.5 C539.2 324.2 541.7 325.0 543.8 325.0 C545.9 325.0 547.1 324.4 548.8 322.5 C550.5 320.6 552.2 316.1 553.8 313.8 C555.3 311.5 556.6 309.2 558.1 308.8 C559.6 308.4 560.5 309.6 562.5 311.3 C564.5 313.0 567.5 315.9 570.0 318.8 C572.5 321.7 575.4 326.4 577.5 328.8 C579.6 331.2 580.8 332.5 582.5 333.1 C584.2 333.7 585.4 333.9 587.5 332.5 C589.6 331.1 592.1 328.3 595.0 325.0 C597.9 321.7 602.5 314.4 605.0 312.5 C607.5 310.6 607.5 312.9 610.0 313.8 C612.5 314.7 618.3 317.4 620.0 318.1" stroke="#e2deec" stroke-width="1.35"/>
<path d="M680.2 177.0 C682.5 178.4 689.3 182.6 694.1 185.4 C698.9 188.2 703.0 191.1 708.9 193.7 C714.8 196.3 724.4 201.4 729.3 201.1 C734.2 200.8 735.4 194.7 738.5 191.9 C741.6 189.1 744.7 185.8 747.8 184.4 C750.9 183.0 753.6 182.9 757.0 183.5 C760.4 184.1 764.7 187.9 768.1 187.8 C771.5 187.7 773.9 183.9 777.4 183.0 C780.9 182.1 787.4 182.7 789.4 182.6" stroke="#e2deec" stroke-width="1.35"/>
<path d="M791.0 412.8 C791.5 413.4 791.8 416.2 794.3 416.1 C796.8 416.0 803.1 412.8 806.2 412.1 C809.3 411.4 809.8 413.0 812.9 412.1 C816.0 411.2 821.9 408.1 824.8 406.8 C827.7 405.5 828.9 405.9 830.2 404.1 C831.5 402.3 831.5 399.3 832.8 396.2 C834.1 393.1 837.2 387.3 838.1 385.5" stroke="#e2deec" stroke-width="1.35"/>
<rect x="855.5" y="97" width="15.5" height="550" fill="#16141e"/>
<rect x="832" y="97.5" width="39" height="22.5" fill="#16141e"/>
<g stroke="#bcb9c4" stroke-width="1.3"><path d="M838 110 L840 106 L840.8 113.5 L842.5 105.5 L843.5 112 L845 107 L846 110.5 L847.5 109.5"/><path d="M848.8 105.5 V107.5 M847.8 106.5 H849.8 M848.8 111 V113" stroke-width="1.2"/></g>
<g stroke="#bcb9c4" stroke-width="1.5"><path d="M859.6 108.3 L862.8 104.8 L866 108.3 M859.6 109.8 L862.8 113.3 L866 109.8 M862.8 107 V111"/></g>
<path d="M862.8 121 V191.5" stroke="#8f8c99" stroke-width="3"/>
<circle cx="862.8" cy="156.7" r="4.4" fill="#ffffff"/>
<rect x="858.3" y="412.7" width="9" height="112.8" rx="4.5" fill="#262432"/>
<path d="M862.8 439 V516" stroke="#6f5fd6" stroke-width="2.2"/>
<rect x="529" y="636.5" width="154" height="7" rx="3.5" fill="#383546"/>
<g stroke="#bcb9c4" stroke-width="1.4"><path d="M779 637.3 L776.5 640 L779 642.7 M783 637.3 L785.5 640 L783 642.7 M778 640 H784"/></g>
<path d="M793 640.2 H863" stroke="#b5b2bd" stroke-width="3"/>
<circle cx="828.2" cy="640.2" r="4.3" fill="#ffffff"/>
<rect x="362.9" y="583.8" width="182.3" height="28.7" rx="6" fill="#17151f" stroke="#2e2b3b" stroke-width="1"/>
<rect x="364.6" y="586.1" width="23.7" height="23.7" rx="4" fill="#7b6aea"/>
<path d="M370.9 591.3 L382.3 595.6 L377.6 597.6 L383.2 603.3 L381.3 605.2 L375.6 599.6 L373.4 604.4 Z" stroke="#ffffff" stroke-width="1.35"/>
<g stroke="#9794a2" stroke-width="1"><path d="M392.2 597.3 L394.8 599.9 L397.4 597.3 M513.4 597 L516.6 600 L519.8 597"/></g>
<g stroke="#bcb9c4" stroke-width="1.4"><path d="M415.4 591.8 L412.9 597.3 A2 2 0 0 0 416.3 599 L419.8 593.6 M413.8 599.4 L411.2 603"/><circle cx="411.1" cy="603.2" r="1.2" fill="#bcb9c4"/></g>
<g stroke="#bcb9c4" stroke-width="1.4"><circle cx="437.8" cy="593.9" r="2"/><circle cx="437.8" cy="601.7" r="2"/><path d="M439.6 598.2 L447 592.3 M441.6 598.9 L447 603.4"/></g>
<g stroke="#bcb9c4" stroke-width="1.3"><path d="M462.5 598 L464.3 593 L465.2 602.8 L467 592.5 L468.2 603 L469.8 593.5 L470.6 601.5 L471.8 597.5"/><circle cx="473.8" cy="597.9" r="0.9" fill="#bcb9c4"/></g>
<path d="M483.7 586.5 V609.5 M526.3 586.5 V609.5" stroke="#2a2838" stroke-width="1"/>
<g stroke="#bcb9c4" stroke-width="1.6"><circle cx="498.3" cy="596.8" r="5"/><path d="M502 600.5 L505.8 604.3"/></g>
<g fill="#c4c1cc"><circle cx="533.9" cy="593.6" r="1.15"/><circle cx="533.9" cy="597.4" r="1.15"/><circle cx="533.9" cy="601.2" r="1.15"/><circle cx="538.2" cy="593.6" r="1.15"/><circle cx="538.2" cy="597.4" r="1.15"/><circle cx="538.2" cy="601.2" r="1.15"/></g>
<g stroke="#f1eff5" stroke-width="1.1" stroke-linecap="butt"><path d="M33.9 149.4 L33.1 158.0 M36.4 149.4 L35.6 158.0"/><path d="M32.0 152.4 L37.3 151.4 M32.0 155.6 L37.3 154.6" stroke-width="1.4"/></g>
<g stroke="#f1eff5" stroke-width="1.1" stroke-linecap="butt"><path d="M33.9 226.3 L33.1 234.9 M36.4 226.3 L35.6 234.9"/><path d="M32.0 229.3 L37.3 228.3 M32.0 232.5 L37.3 231.5" stroke-width="1.4"/></g>
<g stroke="#f1eff5" stroke-width="1.1" stroke-linecap="butt"><path d="M33.9 342.6 L33.1 351.2 M36.4 342.6 L35.6 351.2"/><path d="M32.0 345.6 L37.3 344.6 M32.0 348.8 L37.3 347.8" stroke-width="1.4"/></g>
<g stroke="#f1eff5" stroke-width="1.1" stroke-linecap="butt"><path d="M33.9 420.5 L33.1 429.1 M36.4 420.5 L35.6 429.1"/><path d="M32.0 423.5 L37.3 422.5 M32.0 426.7 L37.3 425.7" stroke-width="1.4"/></g>
<g stroke="#f1eff5" stroke-width="1.1" stroke-linecap="butt"><path d="M33.9 536.2 L33.1 544.8 M36.4 536.2 L35.6 544.8"/><path d="M32.0 539.2 L37.3 538.2 M32.0 542.4 L37.3 541.4" stroke-width="1.4"/></g>
<g stroke="#f1eff5" stroke-width="1.1" stroke-linecap="butt"><path d="M33.9 614.4 L33.1 623.0 M36.4 614.4 L35.6 623.0"/><path d="M32.0 617.4 L37.3 616.4 M32.0 620.6 L37.3 619.6" stroke-width="1.4"/></g>
</svg>
<div class="a" style="left:880px;top:52px;width:191px;height:657px;background:#18151f;border-radius:5px;box-shadow:0 0 0 1px #1c1a2b"></div>
<div class="a" style="left:11px;top:656px;width:859.5px;height:53px;background:#17151f;border-radius:5px;overflow:hidden;box-shadow:0 0 0 1px #1c1a2b">
<div class="a" style="left:0;top:25.3px;width:38px;height:1.5px;background:#2b2937"></div>
<div class="a" style="left:38px;top:0;width:2.2px;height:53px;background:#312e3e"></div>
</div>
<svg class="a" style="left:0;top:0" width="1080" height="715" viewBox="0 0 1080 715" fill="none" stroke-linecap="round" stroke-linejoin="round">
<rect x="59.5" y="658" width="811" height="49.5" rx="4" fill="#17151f" stroke="#34313f" stroke-width="1"/>
<rect x="93.2" y="658.3" width="416.2" height="48.2" rx="3" fill="#2c2550" stroke="#7465d8" stroke-width="1.6"/>
<defs><clipPath id="selc"><rect x="93.2" y="658" width="416.2" height="49"/></clipPath><clipPath id="nselc"><path d="M59 655 H93.2 V710 H59 Z M509.4 655 H871 V710 H509.4 Z"/></clipPath></defs>
<path d="M66.0 681.9 L66.9 681.9 L67.8 681.9 L68.7 681.9 L69.6 681.9 L70.5 681.9 L71.4 681.9 L72.3 681.9 L73.2 681.9 L74.1 681.9 L75.0 681.9 L75.9 681.9 L76.8 681.9 L77.7 681.9 L78.6 681.9 L79.5 681.9 L80.4 681.9 L81.3 681.9 L82.2 681.9 L83.1 681.9 L84.0 681.9 L84.9 681.9 L85.8 681.9 L86.7 681.9 L87.6 681.9 L88.5 681.9 L89.4 681.9 L90.3 681.9 L91.2 681.9 L92.1 681.9 L93.0 681.9 L93.9 678.8 L94.8 677.7 L95.7 677.4 L96.6 677.6 L97.5 677.5 L98.4 677.2 L99.3 677.1 L100.2 677.3 L101.1 677.7 L102.0 678.0 L102.9 678.2 L103.8 678.3 L104.7 678.3 L105.6 678.4 L106.5 678.9 L107.4 679.7 L108.3 681.9 L109.2 681.9 L110.1 681.9 L111.0 679.8 L111.9 678.7 L112.8 678.3 L113.7 678.2 L114.6 678.0 L115.5 677.7 L116.4 677.5 L117.3 677.1 L118.2 676.9 L119.1 676.9 L120.0 677.2 L120.9 676.6 L121.8 676.1 L122.7 676.0 L123.6 676.2 L124.5 676.7 L125.4 677.4 L126.3 677.5 L127.2 677.5 L128.1 677.9 L129.0 678.5 L129.9 679.2 L130.8 679.9 L131.7 681.9 L132.6 681.9 L133.5 681.9 L134.4 681.9 L135.3 681.9 L136.2 681.9 L137.1 681.9 L138.0 678.7 L138.9 677.5 L139.8 676.8 L140.7 676.5 L141.6 676.5 L142.5 676.6 L143.4 676.4 L144.3 676.0 L145.2 675.5 L146.1 675.1 L147.0 675.1 L147.9 675.5 L148.8 675.8 L149.7 675.1 L150.6 674.6 L151.5 674.6 L152.4 675.0 L153.3 675.7 L154.2 676.3 L155.1 676.1 L156.0 676.3 L156.9 676.6 L157.8 676.6 L158.7 676.7 L159.6 677.1 L160.5 677.2 L161.4 677.0 L162.3 677.0 L163.2 677.4 L164.1 678.1 L165.0 679.2 L165.9 680.6 L166.8 681.9 L167.7 681.9 L168.6 681.9 L169.5 681.9 L170.4 681.9 L171.3 681.9 L172.2 681.9 L173.1 681.9 L174.0 681.9 L174.9 681.9 L175.8 681.9 L176.7 681.9 L177.6 681.9 L178.5 681.9 L179.4 681.9 L180.3 681.9 L181.2 681.9 L182.1 681.9 L183.0 681.9 L183.9 681.9 L184.8 681.9 L185.7 681.9 L186.6 681.9 L187.5 681.9 L188.4 681.9 L189.3 681.9 L190.2 681.9 L191.1 681.9 L192.0 680.9 L192.9 680.3 L193.8 680.2 L194.7 680.0 L195.6 679.7 L196.5 679.6 L197.4 679.6 L198.3 679.6 L199.2 679.5 L200.1 679.6 L201.0 679.4 L201.9 679.2 L202.8 679.2 L203.7 679.4 L204.6 679.7 L205.5 680.2 L206.4 680.4 L207.3 680.8 L208.2 679.8 L209.1 678.8 L210.0 678.4 L210.9 678.2 L211.8 677.9 L212.7 677.4 L213.6 676.9 L214.5 676.4 L215.4 676.3 L216.3 676.5 L217.2 676.8 L218.1 676.1 L219.0 675.6 L219.9 675.5 L220.8 675.8 L221.7 676.3 L222.6 676.9 L223.5 676.9 L224.4 677.0 L225.3 677.4 L226.2 677.4 L227.1 677.6 L228.0 678.1 L228.9 678.5 L229.8 678.8 L230.7 679.9 L231.6 681.9 L232.5 681.9 L233.4 681.9 L234.3 681.9 L235.2 678.8 L236.1 677.7 L237.0 677.1 L237.9 676.9 L238.8 676.8 L239.7 676.5 L240.6 676.0 L241.5 675.3 L242.4 674.7 L243.3 674.3 L244.2 674.4 L245.1 674.9 L246.0 674.9 L246.9 674.1 L247.8 673.7 L248.7 673.8 L249.6 674.3 L250.5 674.9 L251.4 675.4 L252.3 675.5 L253.2 675.6 L254.1 675.5 L255.0 675.7 L255.9 676.3 L256.8 677.4 L257.7 678.1 L258.6 680.1 L259.5 681.9 L260.4 681.9 L261.3 681.9 L262.2 681.9 L263.1 681.9 L264.0 677.5 L264.9 676.1 L265.8 675.6 L266.7 675.3 L267.6 675.0 L268.5 675.2 L269.4 674.8 L270.3 674.4 L271.2 674.4 L272.1 675.0 L273.0 676.1 L273.9 677.8 L274.8 680.1 L275.7 681.9 L276.6 681.9 L277.5 680.2 L278.4 679.2 L279.3 678.8 L280.2 678.4 L281.1 678.0 L282.0 677.5 L282.9 677.1 L283.8 676.9 L284.7 677.1 L285.6 677.6 L286.5 677.1 L287.4 676.8 L288.3 676.8 L289.2 677.2 L290.1 677.9 L291.0 678.6 L291.9 679.1 L292.8 679.9 L293.7 680.6 L294.6 679.5 L295.5 678.9 L296.4 678.6 L297.3 678.5 L298.2 677.9 L299.1 677.5 L300.0 677.4 L300.9 677.7 L301.8 678.3 L302.7 679.0 L303.6 679.2 L304.5 679.2 L305.4 679.1 L306.3 679.2 L307.2 679.2 L308.1 679.2 L309.0 679.1 L309.9 678.9 L310.8 678.7 L311.7 678.6 L312.6 678.8 L313.5 679.2 L314.4 679.5 L315.3 679.4 L316.2 679.6 L317.1 680.0 L318.0 680.7 L318.9 681.9 L319.8 681.9 L320.7 681.9 L321.6 680.1 L322.5 679.3 L323.4 678.8 L324.3 678.5 L325.2 678.5 L326.1 678.3 L327.0 677.8 L327.9 677.5 L328.8 677.4 L329.7 677.8 L330.6 678.2 L331.5 678.6 L332.4 678.6 L333.3 678.9 L334.2 679.4 L335.1 680.0 L336.0 681.9 L336.9 680.1 L337.8 679.4 L338.7 678.7 L339.6 678.2 L340.5 678.0 L341.4 678.0 L342.3 678.3 L343.2 678.2 L344.1 677.8 L345.0 677.7 L345.9 677.9 L346.8 678.2 L347.7 678.6 L348.6 678.8 L349.5 678.8 L350.4 678.9 L351.3 679.1 L352.2 679.7 L353.1 681.2 L354.0 681.9 L354.9 681.9 L355.8 680.8 L356.7 679.6 L357.6 679.1 L358.5 679.0 L359.4 679.0 L360.3 678.9 L361.2 678.8 L362.1 678.8 L363.0 678.6 L363.9 678.5 L364.8 678.7 L365.7 679.0 L366.6 678.9 L367.5 678.9 L368.4 679.2 L369.3 680.0 L370.2 680.8 L371.1 679.9 L372.0 679.2 L372.9 678.7 L373.8 678.5 L374.7 678.5 L375.6 678.5 L376.5 678.4 L377.4 678.3 L378.3 678.0 L379.2 677.8 L380.1 677.7 L381.0 678.0 L381.9 678.5 L382.8 679.1 L383.7 679.1 L384.6 679.6 L385.5 681.0 L386.4 681.9 L387.3 681.9 L388.2 681.9 L389.1 681.9 L390.0 681.9 L390.9 681.9 L391.8 681.9 L392.7 681.9 L393.6 681.9 L394.5 681.9 L395.4 681.9 L396.3 681.9 L397.2 681.9 L398.1 681.9 L399.0 681.9 L399.9 681.9 L400.8 681.9 L401.7 681.9 L402.6 681.9 L403.5 681.9 L404.4 681.9 L405.3 681.9 L406.2 681.9 L407.1 681.9 L408.0 681.9 L408.9 681.9 L409.8 681.9 L410.7 681.9 L411.6 681.9 L412.5 681.9 L413.4 681.9 L414.3 681.9 L415.2 681.9 L416.1 681.9 L417.0 681.9 L417.9 681.9 L418.8 673.5 L419.7 672.2 L420.6 672.6 L421.5 674.2 L422.4 677.5 L423.3 680.0 L424.2 678.9 L425.1 678.2 L426.0 677.8 L426.9 677.8 L427.8 677.9 L428.7 677.9 L429.6 677.7 L430.5 677.7 L431.4 677.3 L432.3 677.2 L433.2 677.2 L434.1 677.6 L435.0 677.2 L435.9 676.8 L436.8 676.7 L437.7 677.0 L438.6 677.5 L439.5 678.2 L440.4 678.5 L441.3 678.7 L442.2 679.3 L443.1 680.4 L444.0 680.1 L444.9 679.2 L445.8 678.7 L446.7 678.0 L447.6 677.4 L448.5 676.9 L449.4 676.8 L450.3 677.1 L451.2 677.6 L452.1 677.1 L453.0 676.8 L453.9 676.9 L454.8 677.3 L455.7 677.8 L456.6 678.4 L457.5 678.8 L458.4 679.2 L459.3 680.1 L460.2 679.8 L461.1 678.8 L462.0 678.5 L462.9 678.2 L463.8 677.5 L464.7 676.9 L465.6 676.6 L466.5 676.7 L467.4 677.1 L468.3 677.6 L469.2 677.4 L470.1 677.5 L471.0 677.8 L471.9 678.0 L472.8 678.2 L473.7 678.7 L474.6 679.2 L475.5 680.0 L476.4 677.6 L477.3 675.6 L478.2 674.7 L479.1 674.6 L480.0 674.6 L480.9 673.4 L481.8 672.7 L482.7 672.6 L483.6 672.8 L484.5 673.1 L485.4 673.0 L486.3 672.6 L487.2 671.9 L488.1 671.2 L489.0 671.0 L489.9 671.5 L490.8 672.6 L491.7 672.8 L492.6 672.4 L493.5 672.6 L494.4 673.6 L495.3 675.2 L496.2 677.4 L497.1 680.7 L498.0 679.8 L498.9 679.3 L499.8 679.0 L500.7 678.9 L501.6 679.1 L502.5 679.8 L503.4 680.6 L504.3 681.9 L505.2 681.9 L506.1 681.9 L507.0 681.9 L507.9 681.9 L508.8 681.9 L509.7 681.9 L510.6 681.9 L511.5 681.9 L512.4 681.9 L513.3 681.0 L514.2 680.3 L515.1 679.7 L516.0 679.2 L516.9 678.8 L517.8 678.7 L518.7 678.8 L519.6 679.1 L520.5 678.9 L521.4 678.7 L522.3 678.8 L523.2 679.1 L524.1 679.5 L525.0 679.9 L525.9 680.4 L526.8 681.4 L527.7 681.9 L528.6 680.5 L529.5 679.8 L530.4 679.6 L531.3 679.5 L532.2 679.0 L533.1 678.6 L534.0 678.5 L534.9 678.6 L535.8 678.9 L536.7 679.2 L537.6 679.3 L538.5 679.4 L539.4 679.8 L540.3 680.0 L541.2 680.5 L542.1 681.9 L543.0 681.9 L543.9 672.6 L544.8 670.1 L545.7 669.5 L546.6 670.1 L547.5 671.5 L548.4 673.2 L549.3 673.5 L550.2 675.1 L551.1 681.9 L552.0 681.9 L552.9 681.9 L553.8 681.9 L554.7 681.9 L555.6 681.9 L556.5 681.9 L557.4 681.9 L558.3 680.6 L559.2 680.0 L560.1 679.9 L561.0 679.9 L561.9 681.1 L562.8 681.9 L563.7 681.9 L564.6 681.9 L565.5 681.9 L566.4 681.9 L567.3 681.9 L568.2 681.9 L569.1 681.9 L570.0 681.9 L570.9 681.9 L571.8 681.9 L572.7 679.6 L573.6 677.3 L574.5 676.3 L575.4 676.0 L576.3 676.1 L577.2 676.1 L578.1 675.6 L579.0 675.5 L579.9 675.8 L580.8 676.0 L581.7 676.1 L582.6 676.7 L583.5 676.7 L584.4 677.0 L585.3 678.0 L586.2 679.5 L587.1 677.7 L588.0 677.3 L588.9 676.6 L589.8 675.7 L590.7 675.2 L591.6 675.2 L592.5 675.6 L593.4 675.9 L594.3 676.1 L595.2 676.0 L596.1 675.9 L597.0 676.1 L597.9 676.6 L598.8 677.7 L599.7 679.7 L600.6 681.9 L601.5 681.9 L602.4 681.9 L603.3 681.9 L604.2 681.9 L605.1 681.9 L606.0 681.9 L606.9 680.7 L607.8 680.3 L608.7 679.9 L609.6 679.6 L610.5 679.5 L611.4 679.5 L612.3 679.1 L613.2 678.7 L614.1 678.5 L615.0 678.6 L615.9 678.8 L616.8 679.2 L617.7 678.9 L618.6 678.8 L619.5 678.9 L620.4 679.2 L621.3 679.4 L622.2 679.5 L623.1 679.6 L624.0 679.6 L624.9 679.7 L625.8 679.9 L626.7 680.5 L627.6 681.9 L628.5 681.9 L629.4 681.9 L630.3 681.9 L631.2 681.9 L632.1 681.9 L633.0 681.9 L633.9 681.9 L634.8 681.9 L635.7 681.9 L636.6 681.9 L637.5 681.9 L638.4 681.9 L639.3 681.9 L640.2 677.7 L641.1 674.9 L642.0 673.0 L642.9 672.0 L643.8 671.8 L644.7 672.2 L645.6 672.4 L646.5 671.6 L647.4 671.4 L648.3 671.7 L649.2 671.8 L650.1 671.7 L651.0 672.4 L651.9 672.4 L652.8 672.5 L653.7 673.5 L654.6 676.2 L655.5 674.6 L656.4 672.6 L657.3 671.4 L658.2 669.8 L659.1 669.4 L660.0 669.8 L660.9 670.6 L661.8 671.5 L662.7 672.0 L663.6 672.1 L664.5 672.1 L665.4 672.5 L666.3 673.6 L667.2 675.7 L668.1 680.6 L669.0 678.4 L669.9 677.1 L670.8 676.3 L671.7 676.0 L672.6 676.2 L673.5 676.6 L674.4 676.7 L675.3 676.8 L676.2 677.2 L677.1 677.3 L678.0 677.8 L678.9 678.9 L679.8 681.9 L680.7 681.9 L681.6 681.9 L682.5 681.9 L683.4 679.8 L684.3 679.3 L685.2 679.3 L686.1 678.9 L687.0 678.5 L687.9 678.3 L688.8 678.4 L689.7 678.5 L690.6 678.4 L691.5 678.3 L692.4 678.0 L693.3 677.8 L694.2 677.7 L695.1 677.9 L696.0 678.3 L696.9 678.9 L697.8 678.8 L698.7 678.9 L699.6 679.4 L700.5 680.3 L701.4 681.9 L702.3 681.9 L703.2 681.9 L704.1 681.1 L705.0 679.5 L705.9 678.7 L706.8 678.3 L707.7 678.3 L708.6 678.3 L709.5 677.8 L710.4 677.6 L711.3 677.7 L712.2 678.2 L713.1 679.0 L714.0 680.0 L714.9 681.9 L715.8 681.9 L716.7 681.9 L717.6 681.9 L718.5 681.9 L719.4 681.4 L720.3 680.3 L721.2 679.6 L722.1 679.0 L723.0 678.7 L723.9 678.6 L724.8 678.7 L725.7 678.8 L726.6 678.3 L727.5 678.1 L728.4 678.1 L729.3 678.2 L730.2 678.4 L731.1 678.4 L732.0 678.3 L732.9 678.0 L733.8 677.8 L734.7 677.7 L735.6 677.9 L736.5 678.3 L737.4 678.3 L738.3 678.0 L739.2 677.9 L740.1 678.1 L741.0 678.5 L741.9 679.0 L742.8 679.3 L743.7 679.5 L744.6 679.8 L745.5 680.1 L746.4 680.8 L747.3 681.9 L748.2 681.9 L749.1 681.9 L750.0 681.9 L750.9 681.9 L751.8 681.9 L752.7 681.9 L753.6 681.9 L754.5 681.9 L755.4 681.9 L756.3 681.9 L757.2 681.9 L758.1 681.9 L759.0 681.9 L759.9 681.9 L760.8 681.9 L761.7 681.9 L762.6 681.9 L763.5 681.9 L764.4 681.9 L765.3 680.3 L766.2 677.8 L767.1 676.5 L768.0 675.9 L768.9 676.0 L769.8 676.5 L770.7 677.0 L771.6 677.4 L772.5 677.7 L773.4 678.3 L774.3 680.4 L775.2 681.9 L776.1 681.9 L777.0 681.9 L777.9 681.9 L778.8 681.9 L779.7 681.9 L780.6 680.7 L781.5 679.1 L782.4 678.6 L783.3 678.0 L784.2 677.6 L785.1 677.5 L786.0 677.2 L786.9 676.9 L787.8 676.9 L788.7 676.7 L789.6 676.1 L790.5 675.6 L791.4 675.4 L792.3 675.7 L793.2 676.3 L794.1 676.9 L795.0 676.5 L795.9 676.5 L796.8 676.8 L797.7 677.4 L798.6 678.0 L799.5 678.4 L800.4 678.9 L801.3 679.6 L802.2 681.9 L803.1 681.9 L804.0 681.9 L804.9 681.9 L805.8 681.9 L806.7 681.9 L807.6 681.9 L808.5 678.9 L809.4 677.8 L810.3 677.5 L811.2 677.2 L812.1 676.7 L813.0 676.4 L813.9 675.8 L814.8 675.3 L815.7 675.2 L816.6 675.5 L817.5 674.9 L818.4 674.1 L819.3 673.6 L820.2 673.5 L821.1 674.0 L822.0 674.8 L822.9 675.0 L823.8 674.6 L824.7 674.7 L825.6 675.1 L826.5 675.5 L827.4 675.5 L828.3 675.9 L829.2 675.6 L830.1 675.4 L831.0 675.4 L831.9 675.9 L832.8 676.8 L833.7 677.9 L834.6 678.6 L835.5 681.9 L836.4 681.9 L837.3 681.9 L838.2 681.9 L839.1 681.9 L840.0 681.9 L840.9 681.9 L841.8 681.9 L842.7 681.9 L843.6 681.9 L844.5 681.9 L845.4 681.9 L846.3 681.9 L847.2 681.9 L848.1 681.9 L849.0 681.9 L849.9 681.9 L850.8 681.9 L851.7 681.9 L852.6 681.9 L853.5 681.9 L854.4 681.9 L855.3 681.9 L856.2 681.9 L857.1 681.9 L858.0 681.9 L858.9 681.9 L859.8 681.9 L860.7 681.9 L861.6 681.9 L862.5 681.9 L863.4 680.8 L864.3 680.0 L865.2 679.7 L866.1 679.5 L867.0 679.5 L867.9 679.4 L868.8 679.2 L869.7 678.9 L870.6 678.7 L870.6 686.1 L869.7 685.9 L868.8 685.6 L867.9 685.4 L867.0 685.3 L866.1 685.3 L865.2 685.1 L864.3 684.8 L863.4 684.0 L862.5 682.9 L861.6 682.9 L860.7 682.9 L859.8 682.9 L858.9 682.9 L858.0 682.9 L857.1 682.9 L856.2 682.9 L855.3 682.9 L854.4 682.9 L853.5 682.9 L852.6 682.9 L851.7 682.9 L850.8 682.9 L849.9 682.9 L849.0 682.9 L848.1 682.9 L847.2 682.9 L846.3 682.9 L845.4 682.9 L844.5 682.9 L843.6 682.9 L842.7 682.9 L841.8 682.9 L840.9 682.9 L840.0 682.9 L839.1 682.9 L838.2 682.9 L837.3 682.9 L836.4 682.9 L835.5 682.9 L834.6 686.2 L833.7 686.9 L832.8 688.0 L831.9 688.9 L831.0 689.4 L830.1 689.4 L829.2 689.2 L828.3 688.9 L827.4 689.3 L826.5 689.3 L825.6 689.7 L824.7 690.1 L823.8 690.2 L822.9 689.8 L822.0 690.0 L821.1 690.8 L820.2 691.3 L819.3 691.2 L818.4 690.7 L817.5 689.9 L816.6 689.3 L815.7 689.6 L814.8 689.5 L813.9 689.0 L813.0 688.4 L812.1 688.1 L811.2 687.6 L810.3 687.3 L809.4 687.0 L808.5 685.9 L807.6 682.9 L806.7 682.9 L805.8 682.9 L804.9 682.9 L804.0 682.9 L803.1 682.9 L802.2 682.9 L801.3 685.2 L800.4 685.9 L799.5 686.4 L798.6 686.8 L797.7 687.4 L796.8 688.0 L795.9 688.3 L795.0 688.3 L794.1 687.9 L793.2 688.5 L792.3 689.1 L791.4 689.4 L790.5 689.2 L789.6 688.7 L788.7 688.1 L787.8 687.9 L786.9 687.9 L786.0 687.6 L785.1 687.3 L784.2 687.2 L783.3 686.8 L782.4 686.2 L781.5 685.7 L780.6 684.1 L779.7 682.9 L778.8 682.9 L777.9 682.9 L777.0 682.9 L776.1 682.9 L775.2 682.9 L774.3 684.4 L773.4 686.5 L772.5 687.1 L771.6 687.4 L770.7 687.8 L769.8 688.3 L768.9 688.8 L768.0 688.9 L767.1 688.3 L766.2 687.0 L765.3 684.5 L764.4 682.9 L763.5 682.9 L762.6 682.9 L761.7 682.9 L760.8 682.9 L759.9 682.9 L759.0 682.9 L758.1 682.9 L757.2 682.9 L756.3 682.9 L755.4 682.9 L754.5 682.9 L753.6 682.9 L752.7 682.9 L751.8 682.9 L750.9 682.9 L750.0 682.9 L749.1 682.9 L748.2 682.9 L747.3 682.9 L746.4 684.0 L745.5 684.7 L744.6 685.0 L743.7 685.3 L742.8 685.5 L741.9 685.8 L741.0 686.3 L740.1 686.7 L739.2 686.9 L738.3 686.8 L737.4 686.5 L736.5 686.5 L735.6 686.9 L734.7 687.1 L733.8 687.0 L732.9 686.8 L732.0 686.5 L731.1 686.4 L730.2 686.4 L729.3 686.6 L728.4 686.7 L727.5 686.7 L726.6 686.5 L725.7 686.0 L724.8 686.1 L723.9 686.2 L723.0 686.1 L722.1 685.8 L721.2 685.2 L720.3 684.5 L719.4 683.4 L718.5 682.9 L717.6 682.9 L716.7 682.9 L715.8 682.9 L714.9 682.9 L714.0 684.8 L713.1 685.8 L712.2 686.6 L711.3 687.1 L710.4 687.2 L709.5 687.0 L708.6 686.5 L707.7 686.5 L706.8 686.5 L705.9 686.1 L705.0 685.3 L704.1 683.7 L703.2 682.9 L702.3 682.9 L701.4 682.9 L700.5 684.5 L699.6 685.4 L698.7 685.9 L697.8 686.0 L696.9 685.9 L696.0 686.5 L695.1 686.9 L694.2 687.1 L693.3 687.0 L692.4 686.8 L691.5 686.5 L690.6 686.4 L689.7 686.3 L688.8 686.4 L687.9 686.5 L687.0 686.3 L686.1 685.9 L685.2 685.5 L684.3 685.5 L683.4 685.0 L682.5 682.9 L681.6 682.9 L680.7 682.9 L679.8 682.9 L678.9 685.9 L678.0 687.0 L677.1 687.5 L676.2 687.6 L675.3 688.0 L674.4 688.1 L673.5 688.2 L672.6 688.6 L671.7 688.8 L670.8 688.5 L669.9 687.7 L669.0 686.4 L668.1 684.2 L667.2 689.1 L666.3 691.2 L665.4 692.3 L664.5 692.7 L663.6 692.7 L662.7 692.8 L661.8 693.3 L660.9 694.2 L660.0 695.0 L659.1 695.4 L658.2 695.0 L657.3 693.4 L656.4 692.2 L655.5 690.2 L654.6 688.6 L653.7 691.3 L652.8 692.3 L651.9 692.4 L651.0 692.4 L650.1 693.1 L649.2 693.0 L648.3 693.1 L647.4 693.4 L646.5 693.2 L645.6 692.4 L644.7 692.6 L643.8 693.0 L642.9 692.8 L642.0 691.8 L641.1 689.9 L640.2 687.1 L639.3 682.9 L638.4 682.9 L637.5 682.9 L636.6 682.9 L635.7 682.9 L634.8 682.9 L633.9 682.9 L633.0 682.9 L632.1 682.9 L631.2 682.9 L630.3 682.9 L629.4 682.9 L628.5 682.9 L627.6 682.9 L626.7 684.3 L625.8 684.9 L624.9 685.1 L624.0 685.2 L623.1 685.2 L622.2 685.3 L621.3 685.4 L620.4 685.6 L619.5 685.9 L618.6 686.0 L617.7 685.9 L616.8 685.6 L615.9 686.0 L615.0 686.2 L614.1 686.3 L613.2 686.1 L612.3 685.7 L611.4 685.3 L610.5 685.3 L609.6 685.2 L608.7 684.9 L607.8 684.5 L606.9 684.1 L606.0 682.9 L605.1 682.9 L604.2 682.9 L603.3 682.9 L602.4 682.9 L601.5 682.9 L600.6 682.9 L599.7 685.1 L598.8 687.1 L597.9 688.2 L597.0 688.7 L596.1 688.9 L595.2 688.8 L594.3 688.7 L593.4 688.9 L592.5 689.2 L591.6 689.6 L590.7 689.6 L589.8 689.1 L588.9 688.2 L588.0 687.5 L587.1 687.1 L586.2 685.3 L585.3 686.8 L584.4 687.8 L583.5 688.1 L582.6 688.1 L581.7 688.7 L580.8 688.8 L579.9 689.0 L579.0 689.3 L578.1 689.2 L577.2 688.7 L576.3 688.7 L575.4 688.8 L574.5 688.5 L573.6 687.5 L572.7 685.2 L571.8 682.9 L570.9 682.9 L570.0 682.9 L569.1 682.9 L568.2 682.9 L567.3 682.9 L566.4 682.9 L565.5 682.9 L564.6 682.9 L563.7 682.9 L562.8 682.9 L561.9 683.7 L561.0 684.9 L560.1 684.9 L559.2 684.8 L558.3 684.2 L557.4 682.9 L556.5 682.9 L555.6 682.9 L554.7 682.9 L553.8 682.9 L552.9 682.9 L552.0 682.9 L551.1 682.9 L550.2 689.7 L549.3 691.3 L548.4 691.6 L547.5 693.3 L546.6 694.7 L545.7 695.3 L544.8 694.7 L543.9 692.2 L543.0 682.9 L542.1 682.9 L541.2 684.3 L540.3 684.8 L539.4 685.0 L538.5 685.4 L537.6 685.5 L536.7 685.6 L535.8 685.9 L534.9 686.2 L534.0 686.3 L533.1 686.2 L532.2 685.8 L531.3 685.3 L530.4 685.2 L529.5 685.0 L528.6 684.3 L527.7 682.9 L526.8 683.4 L525.9 684.4 L525.0 684.9 L524.1 685.3 L523.2 685.7 L522.3 686.0 L521.4 686.1 L520.5 685.9 L519.6 685.7 L518.7 686.0 L517.8 686.1 L516.9 686.0 L516.0 685.6 L515.1 685.1 L514.2 684.5 L513.3 683.8 L512.4 682.9 L511.5 682.9 L510.6 682.9 L509.7 682.9 L508.8 682.9 L507.9 682.9 L507.0 682.9 L506.1 682.9 L505.2 682.9 L504.3 682.9 L503.4 684.2 L502.5 685.0 L501.6 685.7 L500.7 685.9 L499.8 685.8 L498.9 685.5 L498.0 685.0 L497.1 684.1 L496.2 687.4 L495.3 689.6 L494.4 691.2 L493.5 692.2 L492.6 692.4 L491.7 692.0 L490.8 692.2 L489.9 693.3 L489.0 693.8 L488.1 693.6 L487.2 692.9 L486.3 692.2 L485.4 691.8 L484.5 691.7 L483.6 692.0 L482.7 692.2 L481.8 692.1 L480.9 691.4 L480.0 690.2 L479.1 690.2 L478.2 690.1 L477.3 689.2 L476.4 687.2 L475.5 684.8 L474.6 685.6 L473.7 686.1 L472.8 686.6 L471.9 686.8 L471.0 687.0 L470.1 687.3 L469.2 687.4 L468.3 687.2 L467.4 687.7 L466.5 688.1 L465.6 688.2 L464.7 687.9 L463.8 687.3 L462.9 686.6 L462.0 686.3 L461.1 686.0 L460.2 685.0 L459.3 684.7 L458.4 685.6 L457.5 686.0 L456.6 686.4 L455.7 687.0 L454.8 687.5 L453.9 687.9 L453.0 688.0 L452.1 687.7 L451.2 687.2 L450.3 687.7 L449.4 688.0 L448.5 687.9 L447.6 687.4 L446.7 686.8 L445.8 686.1 L444.9 685.6 L444.0 684.7 L443.1 684.4 L442.2 685.5 L441.3 686.1 L440.4 686.3 L439.5 686.6 L438.6 687.3 L437.7 687.8 L436.8 688.1 L435.9 688.0 L435.0 687.6 L434.1 687.2 L433.2 687.6 L432.3 687.6 L431.4 687.5 L430.5 687.1 L429.6 687.1 L428.7 686.9 L427.8 686.9 L426.9 687.0 L426.0 687.0 L425.1 686.6 L424.2 685.9 L423.3 684.8 L422.4 687.3 L421.5 690.6 L420.6 692.2 L419.7 692.6 L418.8 691.3 L417.9 682.9 L417.0 682.9 L416.1 682.9 L415.2 682.9 L414.3 682.9 L413.4 682.9 L412.5 682.9 L411.6 682.9 L410.7 682.9 L409.8 682.9 L408.9 682.9 L408.0 682.9 L407.1 682.9 L406.2 682.9 L405.3 682.9 L404.4 682.9 L403.5 682.9 L402.6 682.9 L401.7 682.9 L400.8 682.9 L399.9 682.9 L399.0 682.9 L398.1 682.9 L397.2 682.9 L396.3 682.9 L395.4 682.9 L394.5 682.9 L393.6 682.9 L392.7 682.9 L391.8 682.9 L390.9 682.9 L390.0 682.9 L389.1 682.9 L388.2 682.9 L387.3 682.9 L386.4 682.9 L385.5 683.8 L384.6 685.2 L383.7 685.7 L382.8 685.7 L381.9 686.3 L381.0 686.8 L380.1 687.1 L379.2 687.0 L378.3 686.8 L377.4 686.5 L376.5 686.4 L375.6 686.3 L374.7 686.3 L373.8 686.3 L372.9 686.1 L372.0 685.6 L371.1 684.9 L370.2 684.0 L369.3 684.8 L368.4 685.6 L367.5 685.9 L366.6 685.9 L365.7 685.8 L364.8 686.1 L363.9 686.3 L363.0 686.2 L362.1 686.0 L361.2 686.0 L360.3 685.9 L359.4 685.8 L358.5 685.8 L357.6 685.7 L356.7 685.2 L355.8 684.0 L354.9 682.9 L354.0 682.9 L353.1 683.6 L352.2 685.1 L351.3 685.7 L350.4 685.9 L349.5 686.0 L348.6 686.0 L347.7 686.2 L346.8 686.6 L345.9 686.9 L345.0 687.1 L344.1 687.0 L343.2 686.6 L342.3 686.5 L341.4 686.8 L340.5 686.8 L339.6 686.6 L338.7 686.1 L337.8 685.4 L336.9 684.7 L336.0 682.9 L335.1 684.8 L334.2 685.4 L333.3 685.9 L332.4 686.2 L331.5 686.2 L330.6 686.6 L329.7 687.0 L328.8 687.4 L327.9 687.3 L327.0 687.0 L326.1 686.5 L325.2 686.3 L324.3 686.3 L323.4 686.0 L322.5 685.5 L321.6 684.7 L320.7 682.9 L319.8 682.9 L318.9 682.9 L318.0 684.1 L317.1 684.8 L316.2 685.2 L315.3 685.4 L314.4 685.3 L313.5 685.6 L312.6 686.0 L311.7 686.2 L310.8 686.1 L309.9 685.9 L309.0 685.7 L308.1 685.6 L307.2 685.6 L306.3 685.6 L305.4 685.7 L304.5 685.6 L303.6 685.6 L302.7 685.8 L301.8 686.5 L300.9 687.1 L300.0 687.4 L299.1 687.3 L298.2 686.9 L297.3 686.3 L296.4 686.2 L295.5 685.9 L294.6 685.3 L293.7 684.2 L292.8 684.9 L291.9 685.7 L291.0 686.2 L290.1 686.9 L289.2 687.6 L288.3 688.0 L287.4 688.0 L286.5 687.7 L285.6 687.2 L284.7 687.7 L283.8 687.9 L282.9 687.7 L282.0 687.3 L281.1 686.8 L280.2 686.4 L279.3 686.0 L278.4 685.6 L277.5 684.6 L276.6 682.9 L275.7 682.9 L274.8 684.7 L273.9 687.0 L273.0 688.7 L272.1 689.8 L271.2 690.4 L270.3 690.4 L269.4 690.0 L268.5 689.6 L267.6 689.8 L266.7 689.5 L265.8 689.2 L264.9 688.7 L264.0 687.3 L263.1 682.9 L262.2 682.9 L261.3 682.9 L260.4 682.9 L259.5 682.9 L258.6 684.7 L257.7 686.7 L256.8 687.4 L255.9 688.5 L255.0 689.1 L254.1 689.3 L253.2 689.2 L252.3 689.3 L251.4 689.4 L250.5 689.9 L249.6 690.5 L248.7 691.0 L247.8 691.1 L246.9 690.7 L246.0 689.9 L245.1 689.9 L244.2 690.4 L243.3 690.5 L242.4 690.1 L241.5 689.5 L240.6 688.8 L239.7 688.3 L238.8 688.0 L237.9 687.9 L237.0 687.7 L236.1 687.1 L235.2 686.0 L234.3 682.9 L233.4 682.9 L232.5 682.9 L231.6 682.9 L230.7 684.9 L229.8 686.0 L228.9 686.3 L228.0 686.7 L227.1 687.2 L226.2 687.4 L225.3 687.4 L224.4 687.8 L223.5 687.9 L222.6 687.9 L221.7 688.5 L220.8 689.0 L219.9 689.3 L219.0 689.2 L218.1 688.7 L217.2 688.0 L216.3 688.3 L215.4 688.5 L214.5 688.4 L213.6 687.9 L212.7 687.4 L211.8 686.9 L210.9 686.6 L210.0 686.4 L209.1 686.0 L208.2 685.0 L207.3 684.0 L206.4 684.4 L205.5 684.6 L204.6 685.1 L203.7 685.4 L202.8 685.6 L201.9 685.6 L201.0 685.4 L200.1 685.2 L199.2 685.3 L198.3 685.2 L197.4 685.2 L196.5 685.2 L195.6 685.1 L194.7 684.8 L193.8 684.6 L192.9 684.5 L192.0 683.9 L191.1 682.9 L190.2 682.9 L189.3 682.9 L188.4 682.9 L187.5 682.9 L186.6 682.9 L185.7 682.9 L184.8 682.9 L183.9 682.9 L183.0 682.9 L182.1 682.9 L181.2 682.9 L180.3 682.9 L179.4 682.9 L178.5 682.9 L177.6 682.9 L176.7 682.9 L175.8 682.9 L174.9 682.9 L174.0 682.9 L173.1 682.9 L172.2 682.9 L171.3 682.9 L170.4 682.9 L169.5 682.9 L168.6 682.9 L167.7 682.9 L166.8 682.9 L165.9 684.2 L165.0 685.6 L164.1 686.7 L163.2 687.4 L162.3 687.8 L161.4 687.8 L160.5 687.6 L159.6 687.7 L158.7 688.1 L157.8 688.2 L156.9 688.2 L156.0 688.5 L155.1 688.7 L154.2 688.5 L153.3 689.1 L152.4 689.8 L151.5 690.2 L150.6 690.2 L149.7 689.7 L148.8 689.0 L147.9 689.3 L147.0 689.7 L146.1 689.7 L145.2 689.3 L144.3 688.8 L143.4 688.4 L142.5 688.2 L141.6 688.3 L140.7 688.3 L139.8 688.0 L138.9 687.3 L138.0 686.1 L137.1 682.9 L136.2 682.9 L135.3 682.9 L134.4 682.9 L133.5 682.9 L132.6 682.9 L131.7 682.9 L130.8 684.9 L129.9 685.6 L129.0 686.3 L128.1 686.9 L127.2 687.3 L126.3 687.3 L125.4 687.4 L124.5 688.1 L123.6 688.6 L122.7 688.8 L121.8 688.7 L120.9 688.2 L120.0 687.6 L119.1 687.9 L118.2 687.9 L117.3 687.7 L116.4 687.3 L115.5 687.1 L114.6 686.8 L113.7 686.6 L112.8 686.5 L111.9 686.1 L111.0 685.0 L110.1 682.9 L109.2 682.9 L108.3 682.9 L107.4 685.1 L106.5 685.9 L105.6 686.4 L104.7 686.5 L103.8 686.5 L102.9 686.6 L102.0 686.8 L101.1 687.1 L100.2 687.5 L99.3 687.7 L98.4 687.6 L97.5 687.3 L96.6 687.2 L95.7 687.4 L94.8 687.1 L93.9 686.0 L93.0 682.9 L92.1 682.9 L91.2 682.9 L90.3 682.9 L89.4 682.9 L88.5 682.9 L87.6 682.9 L86.7 682.9 L85.8 682.9 L84.9 682.9 L84.0 682.9 L83.1 682.9 L82.2 682.9 L81.3 682.9 L80.4 682.9 L79.5 682.9 L78.6 682.9 L77.7 682.9 L76.8 682.9 L75.9 682.9 L75.0 682.9 L74.1 682.9 L73.2 682.9 L72.3 682.9 L71.4 682.9 L70.5 682.9 L69.6 682.9 L68.7 682.9 L67.8 682.9 L66.9 682.9 L66.0 682.9Z" fill="#85828f" clip-path="url(#nselc)"/>
<path d="M66.0 681.9 L66.9 681.9 L67.8 681.9 L68.7 681.9 L69.6 681.9 L70.5 681.9 L71.4 681.9 L72.3 681.9 L73.2 681.9 L74.1 681.9 L75.0 681.9 L75.9 681.9 L76.8 681.9 L77.7 681.9 L78.6 681.9 L79.5 681.9 L80.4 681.9 L81.3 681.9 L82.2 681.9 L83.1 681.9 L84.0 681.9 L84.9 681.9 L85.8 681.9 L86.7 681.9 L87.6 681.9 L88.5 681.9 L89.4 681.9 L90.3 681.9 L91.2 681.9 L92.1 681.9 L93.0 681.9 L93.9 678.8 L94.8 677.7 L95.7 677.4 L96.6 677.6 L97.5 677.5 L98.4 677.2 L99.3 677.1 L100.2 677.3 L101.1 677.7 L102.0 678.0 L102.9 678.2 L103.8 678.3 L104.7 678.3 L105.6 678.4 L106.5 678.9 L107.4 679.7 L108.3 681.9 L109.2 681.9 L110.1 681.9 L111.0 679.8 L111.9 678.7 L112.8 678.3 L113.7 678.2 L114.6 678.0 L115.5 677.7 L116.4 677.5 L117.3 677.1 L118.2 676.9 L119.1 676.9 L120.0 677.2 L120.9 676.6 L121.8 676.1 L122.7 676.0 L123.6 676.2 L124.5 676.7 L125.4 677.4 L126.3 677.5 L127.2 677.5 L128.1 677.9 L129.0 678.5 L129.9 679.2 L130.8 679.9 L131.7 681.9 L132.6 681.9 L133.5 681.9 L134.4 681.9 L135.3 681.9 L136.2 681.9 L137.1 681.9 L138.0 678.7 L138.9 677.5 L139.8 676.8 L140.7 676.5 L141.6 676.5 L142.5 676.6 L143.4 676.4 L144.3 676.0 L145.2 675.5 L146.1 675.1 L147.0 675.1 L147.9 675.5 L148.8 675.8 L149.7 675.1 L150.6 674.6 L151.5 674.6 L152.4 675.0 L153.3 675.7 L154.2 676.3 L155.1 676.1 L156.0 676.3 L156.9 676.6 L157.8 676.6 L158.7 676.7 L159.6 677.1 L160.5 677.2 L161.4 677.0 L162.3 677.0 L163.2 677.4 L164.1 678.1 L165.0 679.2 L165.9 680.6 L166.8 681.9 L167.7 681.9 L168.6 681.9 L169.5 681.9 L170.4 681.9 L171.3 681.9 L172.2 681.9 L173.1 681.9 L174.0 681.9 L174.9 681.9 L175.8 681.9 L176.7 681.9 L177.6 681.9 L178.5 681.9 L179.4 681.9 L180.3 681.9 L181.2 681.9 L182.1 681.9 L183.0 681.9 L183.9 681.9 L184.8 681.9 L185.7 681.9 L186.6 681.9 L187.5 681.9 L188.4 681.9 L189.3 681.9 L190.2 681.9 L191.1 681.9 L192.0 680.9 L192.9 680.3 L193.8 680.2 L194.7 680.0 L195.6 679.7 L196.5 679.6 L197.4 679.6 L198.3 679.6 L199.2 679.5 L200.1 679.6 L201.0 679.4 L201.9 679.2 L202.8 679.2 L203.7 679.4 L204.6 679.7 L205.5 680.2 L206.4 680.4 L207.3 680.8 L208.2 679.8 L209.1 678.8 L210.0 678.4 L210.9 678.2 L211.8 677.9 L212.7 677.4 L213.6 676.9 L214.5 676.4 L215.4 676.3 L216.3 676.5 L217.2 676.8 L218.1 676.1 L219.0 675.6 L219.9 675.5 L220.8 675.8 L221.7 676.3 L222.6 676.9 L223.5 676.9 L224.4 677.0 L225.3 677.4 L226.2 677.4 L227.1 677.6 L228.0 678.1 L228.9 678.5 L229.8 678.8 L230.7 679.9 L231.6 681.9 L232.5 681.9 L233.4 681.9 L234.3 681.9 L235.2 678.8 L236.1 677.7 L237.0 677.1 L237.9 676.9 L238.8 676.8 L239.7 676.5 L240.6 676.0 L241.5 675.3 L242.4 674.7 L243.3 674.3 L244.2 674.4 L245.1 674.9 L246.0 674.9 L246.9 674.1 L247.8 673.7 L248.7 673.8 L249.6 674.3 L250.5 674.9 L251.4 675.4 L252.3 675.5 L253.2 675.6 L254.1 675.5 L255.0 675.7 L255.9 676.3 L256.8 677.4 L257.7 678.1 L258.6 680.1 L259.5 681.9 L260.4 681.9 L261.3 681.9 L262.2 681.9 L263.1 681.9 L264.0 677.5 L264.9 676.1 L265.8 675.6 L266.7 675.3 L267.6 675.0 L268.5 675.2 L269.4 674.8 L270.3 674.4 L271.2 674.4 L272.1 675.0 L273.0 676.1 L273.9 677.8 L274.8 680.1 L275.7 681.9 L276.6 681.9 L277.5 680.2 L278.4 679.2 L279.3 678.8 L280.2 678.4 L281.1 678.0 L282.0 677.5 L282.9 677.1 L283.8 676.9 L284.7 677.1 L285.6 677.6 L286.5 677.1 L287.4 676.8 L288.3 676.8 L289.2 677.2 L290.1 677.9 L291.0 678.6 L291.9 679.1 L292.8 679.9 L293.7 680.6 L294.6 679.5 L295.5 678.9 L296.4 678.6 L297.3 678.5 L298.2 677.9 L299.1 677.5 L300.0 677.4 L300.9 677.7 L301.8 678.3 L302.7 679.0 L303.6 679.2 L304.5 679.2 L305.4 679.1 L306.3 679.2 L307.2 679.2 L308.1 679.2 L309.0 679.1 L309.9 678.9 L310.8 678.7 L311.7 678.6 L312.6 678.8 L313.5 679.2 L314.4 679.5 L315.3 679.4 L316.2 679.6 L317.1 680.0 L318.0 680.7 L318.9 681.9 L319.8 681.9 L320.7 681.9 L321.6 680.1 L322.5 679.3 L323.4 678.8 L324.3 678.5 L325.2 678.5 L326.1 678.3 L327.0 677.8 L327.9 677.5 L328.8 677.4 L329.7 677.8 L330.6 678.2 L331.5 678.6 L332.4 678.6 L333.3 678.9 L334.2 679.4 L335.1 680.0 L336.0 681.9 L336.9 680.1 L337.8 679.4 L338.7 678.7 L339.6 678.2 L340.5 678.0 L341.4 678.0 L342.3 678.3 L343.2 678.2 L344.1 677.8 L345.0 677.7 L345.9 677.9 L346.8 678.2 L347.7 678.6 L348.6 678.8 L349.5 678.8 L350.4 678.9 L351.3 679.1 L352.2 679.7 L353.1 681.2 L354.0 681.9 L354.9 681.9 L355.8 680.8 L356.7 679.6 L357.6 679.1 L358.5 679.0 L359.4 679.0 L360.3 678.9 L361.2 678.8 L362.1 678.8 L363.0 678.6 L363.9 678.5 L364.8 678.7 L365.7 679.0 L366.6 678.9 L367.5 678.9 L368.4 679.2 L369.3 680.0 L370.2 680.8 L371.1 679.9 L372.0 679.2 L372.9 678.7 L373.8 678.5 L374.7 678.5 L375.6 678.5 L376.5 678.4 L377.4 678.3 L378.3 678.0 L379.2 677.8 L380.1 677.7 L381.0 678.0 L381.9 678.5 L382.8 679.1 L383.7 679.1 L384.6 679.6 L385.5 681.0 L386.4 681.9 L387.3 681.9 L388.2 681.9 L389.1 681.9 L390.0 681.9 L390.9 681.9 L391.8 681.9 L392.7 681.9 L393.6 681.9 L394.5 681.9 L395.4 681.9 L396.3 681.9 L397.2 681.9 L398.1 681.9 L399.0 681.9 L399.9 681.9 L400.8 681.9 L401.7 681.9 L402.6 681.9 L403.5 681.9 L404.4 681.9 L405.3 681.9 L406.2 681.9 L407.1 681.9 L408.0 681.9 L408.9 681.9 L409.8 681.9 L410.7 681.9 L411.6 681.9 L412.5 681.9 L413.4 681.9 L414.3 681.9 L415.2 681.9 L416.1 681.9 L417.0 681.9 L417.9 681.9 L418.8 673.5 L419.7 672.2 L420.6 672.6 L421.5 674.2 L422.4 677.5 L423.3 680.0 L424.2 678.9 L425.1 678.2 L426.0 677.8 L426.9 677.8 L427.8 677.9 L428.7 677.9 L429.6 677.7 L430.5 677.7 L431.4 677.3 L432.3 677.2 L433.2 677.2 L434.1 677.6 L435.0 677.2 L435.9 676.8 L436.8 676.7 L437.7 677.0 L438.6 677.5 L439.5 678.2 L440.4 678.5 L441.3 678.7 L442.2 679.3 L443.1 680.4 L444.0 680.1 L444.9 679.2 L445.8 678.7 L446.7 678.0 L447.6 677.4 L448.5 676.9 L449.4 676.8 L450.3 677.1 L451.2 677.6 L452.1 677.1 L453.0 676.8 L453.9 676.9 L454.8 677.3 L455.7 677.8 L456.6 678.4 L457.5 678.8 L458.4 679.2 L459.3 680.1 L460.2 679.8 L461.1 678.8 L462.0 678.5 L462.9 678.2 L463.8 677.5 L464.7 676.9 L465.6 676.6 L466.5 676.7 L467.4 677.1 L468.3 677.6 L469.2 677.4 L470.1 677.5 L471.0 677.8 L471.9 678.0 L472.8 678.2 L473.7 678.7 L474.6 679.2 L475.5 680.0 L476.4 677.6 L477.3 675.6 L478.2 674.7 L479.1 674.6 L480.0 674.6 L480.9 673.4 L481.8 672.7 L482.7 672.6 L483.6 672.8 L484.5 673.1 L485.4 673.0 L486.3 672.6 L487.2 671.9 L488.1 671.2 L489.0 671.0 L489.9 671.5 L490.8 672.6 L491.7 672.8 L492.6 672.4 L493.5 672.6 L494.4 673.6 L495.3 675.2 L496.2 677.4 L497.1 680.7 L498.0 679.8 L498.9 679.3 L499.8 679.0 L500.7 678.9 L501.6 679.1 L502.5 679.8 L503.4 680.6 L504.3 681.9 L505.2 681.9 L506.1 681.9 L507.0 681.9 L507.9 681.9 L508.8 681.9 L509.7 681.9 L510.6 681.9 L511.5 681.9 L512.4 681.9 L513.3 681.0 L514.2 680.3 L515.1 679.7 L516.0 679.2 L516.9 678.8 L517.8 678.7 L518.7 678.8 L519.6 679.1 L520.5 678.9 L521.4 678.7 L522.3 678.8 L523.2 679.1 L524.1 679.5 L525.0 679.9 L525.9 680.4 L526.8 681.4 L527.7 681.9 L528.6 680.5 L529.5 679.8 L530.4 679.6 L531.3 679.5 L532.2 679.0 L533.1 678.6 L534.0 678.5 L534.9 678.6 L535.8 678.9 L536.7 679.2 L537.6 679.3 L538.5 679.4 L539.4 679.8 L540.3 680.0 L541.2 680.5 L542.1 681.9 L543.0 681.9 L543.9 672.6 L544.8 670.1 L545.7 669.5 L546.6 670.1 L547.5 671.5 L548.4 673.2 L549.3 673.5 L550.2 675.1 L551.1 681.9 L552.0 681.9 L552.9 681.9 L553.8 681.9 L554.7 681.9 L555.6 681.9 L556.5 681.9 L557.4 681.9 L558.3 680.6 L559.2 680.0 L560.1 679.9 L561.0 679.9 L561.9 681.1 L562.8 681.9 L563.7 681.9 L564.6 681.9 L565.5 681.9 L566.4 681.9 L567.3 681.9 L568.2 681.9 L569.1 681.9 L570.0 681.9 L570.9 681.9 L571.8 681.9 L572.7 679.6 L573.6 677.3 L574.5 676.3 L575.4 676.0 L576.3 676.1 L577.2 676.1 L578.1 675.6 L579.0 675.5 L579.9 675.8 L580.8 676.0 L581.7 676.1 L582.6 676.7 L583.5 676.7 L584.4 677.0 L585.3 678.0 L586.2 679.5 L587.1 677.7 L588.0 677.3 L588.9 676.6 L589.8 675.7 L590.7 675.2 L591.6 675.2 L592.5 675.6 L593.4 675.9 L594.3 676.1 L595.2 676.0 L596.1 675.9 L597.0 676.1 L597.9 676.6 L598.8 677.7 L599.7 679.7 L600.6 681.9 L601.5 681.9 L602.4 681.9 L603.3 681.9 L604.2 681.9 L605.1 681.9 L606.0 681.9 L606.9 680.7 L607.8 680.3 L608.7 679.9 L609.6 679.6 L610.5 679.5 L611.4 679.5 L612.3 679.1 L613.2 678.7 L614.1 678.5 L615.0 678.6 L615.9 678.8 L616.8 679.2 L617.7 678.9 L618.6 678.8 L619.5 678.9 L620.4 679.2 L621.3 679.4 L622.2 679.5 L623.1 679.6 L624.0 679.6 L624.9 679.7 L625.8 679.9 L626.7 680.5 L627.6 681.9 L628.5 681.9 L629.4 681.9 L630.3 681.9 L631.2 681.9 L632.1 681.9 L633.0 681.9 L633.9 681.9 L634.8 681.9 L635.7 681.9 L636.6 681.9 L637.5 681.9 L638.4 681.9 L639.3 681.9 L640.2 677.7 L641.1 674.9 L642.0 673.0 L642.9 672.0 L643.8 671.8 L644.7 672.2 L645.6 672.4 L646.5 671.6 L647.4 671.4 L648.3 671.7 L649.2 671.8 L650.1 671.7 L651.0 672.4 L651.9 672.4 L652.8 672.5 L653.7 673.5 L654.6 676.2 L655.5 674.6 L656.4 672.6 L657.3 671.4 L658.2 669.8 L659.1 669.4 L660.0 669.8 L660.9 670.6 L661.8 671.5 L662.7 672.0 L663.6 672.1 L664.5 672.1 L665.4 672.5 L666.3 673.6 L667.2 675.7 L668.1 680.6 L669.0 678.4 L669.9 677.1 L670.8 676.3 L671.7 676.0 L672.6 676.2 L673.5 676.6 L674.4 676.7 L675.3 676.8 L676.2 677.2 L677.1 677.3 L678.0 677.8 L678.9 678.9 L679.8 681.9 L680.7 681.9 L681.6 681.9 L682.5 681.9 L683.4 679.8 L684.3 679.3 L685.2 679.3 L686.1 678.9 L687.0 678.5 L687.9 678.3 L688.8 678.4 L689.7 678.5 L690.6 678.4 L691.5 678.3 L692.4 678.0 L693.3 677.8 L694.2 677.7 L695.1 677.9 L696.0 678.3 L696.9 678.9 L697.8 678.8 L698.7 678.9 L699.6 679.4 L700.5 680.3 L701.4 681.9 L702.3 681.9 L703.2 681.9 L704.1 681.1 L705.0 679.5 L705.9 678.7 L706.8 678.3 L707.7 678.3 L708.6 678.3 L709.5 677.8 L710.4 677.6 L711.3 677.7 L712.2 678.2 L713.1 679.0 L714.0 680.0 L714.9 681.9 L715.8 681.9 L716.7 681.9 L717.6 681.9 L718.5 681.9 L719.4 681.4 L720.3 680.3 L721.2 679.6 L722.1 679.0 L723.0 678.7 L723.9 678.6 L724.8 678.7 L725.7 678.8 L726.6 678.3 L727.5 678.1 L728.4 678.1 L729.3 678.2 L730.2 678.4 L731.1 678.4 L732.0 678.3 L732.9 678.0 L733.8 677.8 L734.7 677.7 L735.6 677.9 L736.5 678.3 L737.4 678.3 L738.3 678.0 L739.2 677.9 L740.1 678.1 L741.0 678.5 L741.9 679.0 L742.8 679.3 L743.7 679.5 L744.6 679.8 L745.5 680.1 L746.4 680.8 L747.3 681.9 L748.2 681.9 L749.1 681.9 L750.0 681.9 L750.9 681.9 L751.8 681.9 L752.7 681.9 L753.6 681.9 L754.5 681.9 L755.4 681.9 L756.3 681.9 L757.2 681.9 L758.1 681.9 L759.0 681.9 L759.9 681.9 L760.8 681.9 L761.7 681.9 L762.6 681.9 L763.5 681.9 L764.4 681.9 L765.3 680.3 L766.2 677.8 L767.1 676.5 L768.0 675.9 L768.9 676.0 L769.8 676.5 L770.7 677.0 L771.6 677.4 L772.5 677.7 L773.4 678.3 L774.3 680.4 L775.2 681.9 L776.1 681.9 L777.0 681.9 L777.9 681.9 L778.8 681.9 L779.7 681.9 L780.6 680.7 L781.5 679.1 L782.4 678.6 L783.3 678.0 L784.2 677.6 L785.1 677.5 L786.0 677.2 L786.9 676.9 L787.8 676.9 L788.7 676.7 L789.6 676.1 L790.5 675.6 L791.4 675.4 L792.3 675.7 L793.2 676.3 L794.1 676.9 L795.0 676.5 L795.9 676.5 L796.8 676.8 L797.7 677.4 L798.6 678.0 L799.5 678.4 L800.4 678.9 L801.3 679.6 L802.2 681.9 L803.1 681.9 L804.0 681.9 L804.9 681.9 L805.8 681.9 L806.7 681.9 L807.6 681.9 L808.5 678.9 L809.4 677.8 L810.3 677.5 L811.2 677.2 L812.1 676.7 L813.0 676.4 L813.9 675.8 L814.8 675.3 L815.7 675.2 L816.6 675.5 L817.5 674.9 L818.4 674.1 L819.3 673.6 L820.2 673.5 L821.1 674.0 L822.0 674.8 L822.9 675.0 L823.8 674.6 L824.7 674.7 L825.6 675.1 L826.5 675.5 L827.4 675.5 L828.3 675.9 L829.2 675.6 L830.1 675.4 L831.0 675.4 L831.9 675.9 L832.8 676.8 L833.7 677.9 L834.6 678.6 L835.5 681.9 L836.4 681.9 L837.3 681.9 L838.2 681.9 L839.1 681.9 L840.0 681.9 L840.9 681.9 L841.8 681.9 L842.7 681.9 L843.6 681.9 L844.5 681.9 L845.4 681.9 L846.3 681.9 L847.2 681.9 L848.1 681.9 L849.0 681.9 L849.9 681.9 L850.8 681.9 L851.7 681.9 L852.6 681.9 L853.5 681.9 L854.4 681.9 L855.3 681.9 L856.2 681.9 L857.1 681.9 L858.0 681.9 L858.9 681.9 L859.8 681.9 L860.7 681.9 L861.6 681.9 L862.5 681.9 L863.4 680.8 L864.3 680.0 L865.2 679.7 L866.1 679.5 L867.0 679.5 L867.9 679.4 L868.8 679.2 L869.7 678.9 L870.6 678.7 L870.6 686.1 L869.7 685.9 L868.8 685.6 L867.9 685.4 L867.0 685.3 L866.1 685.3 L865.2 685.1 L864.3 684.8 L863.4 684.0 L862.5 682.9 L861.6 682.9 L860.7 682.9 L859.8 682.9 L858.9 682.9 L858.0 682.9 L857.1 682.9 L856.2 682.9 L855.3 682.9 L854.4 682.9 L853.5 682.9 L852.6 682.9 L851.7 682.9 L850.8 682.9 L849.9 682.9 L849.0 682.9 L848.1 682.9 L847.2 682.9 L846.3 682.9 L845.4 682.9 L844.5 682.9 L843.6 682.9 L842.7 682.9 L841.8 682.9 L840.9 682.9 L840.0 682.9 L839.1 682.9 L838.2 682.9 L837.3 682.9 L836.4 682.9 L835.5 682.9 L834.6 686.2 L833.7 686.9 L832.8 688.0 L831.9 688.9 L831.0 689.4 L830.1 689.4 L829.2 689.2 L828.3 688.9 L827.4 689.3 L826.5 689.3 L825.6 689.7 L824.7 690.1 L823.8 690.2 L822.9 689.8 L822.0 690.0 L821.1 690.8 L820.2 691.3 L819.3 691.2 L818.4 690.7 L817.5 689.9 L816.6 689.3 L815.7 689.6 L814.8 689.5 L813.9 689.0 L813.0 688.4 L812.1 688.1 L811.2 687.6 L810.3 687.3 L809.4 687.0 L808.5 685.9 L807.6 682.9 L806.7 682.9 L805.8 682.9 L804.9 682.9 L804.0 682.9 L803.1 682.9 L802.2 682.9 L801.3 685.2 L800.4 685.9 L799.5 686.4 L798.6 686.8 L797.7 687.4 L796.8 688.0 L795.9 688.3 L795.0 688.3 L794.1 687.9 L793.2 688.5 L792.3 689.1 L791.4 689.4 L790.5 689.2 L789.6 688.7 L788.7 688.1 L787.8 687.9 L786.9 687.9 L786.0 687.6 L785.1 687.3 L784.2 687.2 L783.3 686.8 L782.4 686.2 L781.5 685.7 L780.6 684.1 L779.7 682.9 L778.8 682.9 L777.9 682.9 L777.0 682.9 L776.1 682.9 L775.2 682.9 L774.3 684.4 L773.4 686.5 L772.5 687.1 L771.6 687.4 L770.7 687.8 L769.8 688.3 L768.9 688.8 L768.0 688.9 L767.1 688.3 L766.2 687.0 L765.3 684.5 L764.4 682.9 L763.5 682.9 L762.6 682.9 L761.7 682.9 L760.8 682.9 L759.9 682.9 L759.0 682.9 L758.1 682.9 L757.2 682.9 L756.3 682.9 L755.4 682.9 L754.5 682.9 L753.6 682.9 L752.7 682.9 L751.8 682.9 L750.9 682.9 L750.0 682.9 L749.1 682.9 L748.2 682.9 L747.3 682.9 L746.4 684.0 L745.5 684.7 L744.6 685.0 L743.7 685.3 L742.8 685.5 L741.9 685.8 L741.0 686.3 L740.1 686.7 L739.2 686.9 L738.3 686.8 L737.4 686.5 L736.5 686.5 L735.6 686.9 L734.7 687.1 L733.8 687.0 L732.9 686.8 L732.0 686.5 L731.1 686.4 L730.2 686.4 L729.3 686.6 L728.4 686.7 L727.5 686.7 L726.6 686.5 L725.7 686.0 L724.8 686.1 L723.9 686.2 L723.0 686.1 L722.1 685.8 L721.2 685.2 L720.3 684.5 L719.4 683.4 L718.5 682.9 L717.6 682.9 L716.7 682.9 L715.8 682.9 L714.9 682.9 L714.0 684.8 L713.1 685.8 L712.2 686.6 L711.3 687.1 L710.4 687.2 L709.5 687.0 L708.6 686.5 L707.7 686.5 L706.8 686.5 L705.9 686.1 L705.0 685.3 L704.1 683.7 L703.2 682.9 L702.3 682.9 L701.4 682.9 L700.5 684.5 L699.6 685.4 L698.7 685.9 L697.8 686.0 L696.9 685.9 L696.0 686.5 L695.1 686.9 L694.2 687.1 L693.3 687.0 L692.4 686.8 L691.5 686.5 L690.6 686.4 L689.7 686.3 L688.8 686.4 L687.9 686.5 L687.0 686.3 L686.1 685.9 L685.2 685.5 L684.3 685.5 L683.4 685.0 L682.5 682.9 L681.6 682.9 L680.7 682.9 L679.8 682.9 L678.9 685.9 L678.0 687.0 L677.1 687.5 L676.2 687.6 L675.3 688.0 L674.4 688.1 L673.5 688.2 L672.6 688.6 L671.7 688.8 L670.8 688.5 L669.9 687.7 L669.0 686.4 L668.1 684.2 L667.2 689.1 L666.3 691.2 L665.4 692.3 L664.5 692.7 L663.6 692.7 L662.7 692.8 L661.8 693.3 L660.9 694.2 L660.0 695.0 L659.1 695.4 L658.2 695.0 L657.3 693.4 L656.4 692.2 L655.5 690.2 L654.6 688.6 L653.7 691.3 L652.8 692.3 L651.9 692.4 L651.0 692.4 L650.1 693.1 L649.2 693.0 L648.3 693.1 L647.4 693.4 L646.5 693.2 L645.6 692.4 L644.7 692.6 L643.8 693.0 L642.9 692.8 L642.0 691.8 L641.1 689.9 L640.2 687.1 L639.3 682.9 L638.4 682.9 L637.5 682.9 L636.6 682.9 L635.7 682.9 L634.8 682.9 L633.9 682.9 L633.0 682.9 L632.1 682.9 L631.2 682.9 L630.3 682.9 L629.4 682.9 L628.5 682.9 L627.6 682.9 L626.7 684.3 L625.8 684.9 L624.9 685.1 L624.0 685.2 L623.1 685.2 L622.2 685.3 L621.3 685.4 L620.4 685.6 L619.5 685.9 L618.6 686.0 L617.7 685.9 L616.8 685.6 L615.9 686.0 L615.0 686.2 L614.1 686.3 L613.2 686.1 L612.3 685.7 L611.4 685.3 L610.5 685.3 L609.6 685.2 L608.7 684.9 L607.8 684.5 L606.9 684.1 L606.0 682.9 L605.1 682.9 L604.2 682.9 L603.3 682.9 L602.4 682.9 L601.5 682.9 L600.6 682.9 L599.7 685.1 L598.8 687.1 L597.9 688.2 L597.0 688.7 L596.1 688.9 L595.2 688.8 L594.3 688.7 L593.4 688.9 L592.5 689.2 L591.6 689.6 L590.7 689.6 L589.8 689.1 L588.9 688.2 L588.0 687.5 L587.1 687.1 L586.2 685.3 L585.3 686.8 L584.4 687.8 L583.5 688.1 L582.6 688.1 L581.7 688.7 L580.8 688.8 L579.9 689.0 L579.0 689.3 L578.1 689.2 L577.2 688.7 L576.3 688.7 L575.4 688.8 L574.5 688.5 L573.6 687.5 L572.7 685.2 L571.8 682.9 L570.9 682.9 L570.0 682.9 L569.1 682.9 L568.2 682.9 L567.3 682.9 L566.4 682.9 L565.5 682.9 L564.6 682.9 L563.7 682.9 L562.8 682.9 L561.9 683.7 L561.0 684.9 L560.1 684.9 L559.2 684.8 L558.3 684.2 L557.4 682.9 L556.5 682.9 L555.6 682.9 L554.7 682.9 L553.8 682.9 L552.9 682.9 L552.0 682.9 L551.1 682.9 L550.2 689.7 L549.3 691.3 L548.4 691.6 L547.5 693.3 L546.6 694.7 L545.7 695.3 L544.8 694.7 L543.9 692.2 L543.0 682.9 L542.1 682.9 L541.2 684.3 L540.3 684.8 L539.4 685.0 L538.5 685.4 L537.6 685.5 L536.7 685.6 L535.8 685.9 L534.9 686.2 L534.0 686.3 L533.1 686.2 L532.2 685.8 L531.3 685.3 L530.4 685.2 L529.5 685.0 L528.6 684.3 L527.7 682.9 L526.8 683.4 L525.9 684.4 L525.0 684.9 L524.1 685.3 L523.2 685.7 L522.3 686.0 L521.4 686.1 L520.5 685.9 L519.6 685.7 L518.7 686.0 L517.8 686.1 L516.9 686.0 L516.0 685.6 L515.1 685.1 L514.2 684.5 L513.3 683.8 L512.4 682.9 L511.5 682.9 L510.6 682.9 L509.7 682.9 L508.8 682.9 L507.9 682.9 L507.0 682.9 L506.1 682.9 L505.2 682.9 L504.3 682.9 L503.4 684.2 L502.5 685.0 L501.6 685.7 L500.7 685.9 L499.8 685.8 L498.9 685.5 L498.0 685.0 L497.1 684.1 L496.2 687.4 L495.3 689.6 L494.4 691.2 L493.5 692.2 L492.6 692.4 L491.7 692.0 L490.8 692.2 L489.9 693.3 L489.0 693.8 L488.1 693.6 L487.2 692.9 L486.3 692.2 L485.4 691.8 L484.5 691.7 L483.6 692.0 L482.7 692.2 L481.8 692.1 L480.9 691.4 L480.0 690.2 L479.1 690.2 L478.2 690.1 L477.3 689.2 L476.4 687.2 L475.5 684.8 L474.6 685.6 L473.7 686.1 L472.8 686.6 L471.9 686.8 L471.0 687.0 L470.1 687.3 L469.2 687.4 L468.3 687.2 L467.4 687.7 L466.5 688.1 L465.6 688.2 L464.7 687.9 L463.8 687.3 L462.9 686.6 L462.0 686.3 L461.1 686.0 L460.2 685.0 L459.3 684.7 L458.4 685.6 L457.5 686.0 L456.6 686.4 L455.7 687.0 L454.8 687.5 L453.9 687.9 L453.0 688.0 L452.1 687.7 L451.2 687.2 L450.3 687.7 L449.4 688.0 L448.5 687.9 L447.6 687.4 L446.7 686.8 L445.8 686.1 L444.9 685.6 L444.0 684.7 L443.1 684.4 L442.2 685.5 L441.3 686.1 L440.4 686.3 L439.5 686.6 L438.6 687.3 L437.7 687.8 L436.8 688.1 L435.9 688.0 L435.0 687.6 L434.1 687.2 L433.2 687.6 L432.3 687.6 L431.4 687.5 L430.5 687.1 L429.6 687.1 L428.7 686.9 L427.8 686.9 L426.9 687.0 L426.0 687.0 L425.1 686.6 L424.2 685.9 L423.3 684.8 L422.4 687.3 L421.5 690.6 L420.6 692.2 L419.7 692.6 L418.8 691.3 L417.9 682.9 L417.0 682.9 L416.1 682.9 L415.2 682.9 L414.3 682.9 L413.4 682.9 L412.5 682.9 L411.6 682.9 L410.7 682.9 L409.8 682.9 L408.9 682.9 L408.0 682.9 L407.1 682.9 L406.2 682.9 L405.3 682.9 L404.4 682.9 L403.5 682.9 L402.6 682.9 L401.7 682.9 L400.8 682.9 L399.9 682.9 L399.0 682.9 L398.1 682.9 L397.2 682.9 L396.3 682.9 L395.4 682.9 L394.5 682.9 L393.6 682.9 L392.7 682.9 L391.8 682.9 L390.9 682.9 L390.0 682.9 L389.1 682.9 L388.2 682.9 L387.3 682.9 L386.4 682.9 L385.5 683.8 L384.6 685.2 L383.7 685.7 L382.8 685.7 L381.9 686.3 L381.0 686.8 L380.1 687.1 L379.2 687.0 L378.3 686.8 L377.4 686.5 L376.5 686.4 L375.6 686.3 L374.7 686.3 L373.8 686.3 L372.9 686.1 L372.0 685.6 L371.1 684.9 L370.2 684.0 L369.3 684.8 L368.4 685.6 L367.5 685.9 L366.6 685.9 L365.7 685.8 L364.8 686.1 L363.9 686.3 L363.0 686.2 L362.1 686.0 L361.2 686.0 L360.3 685.9 L359.4 685.8 L358.5 685.8 L357.6 685.7 L356.7 685.2 L355.8 684.0 L354.9 682.9 L354.0 682.9 L353.1 683.6 L352.2 685.1 L351.3 685.7 L350.4 685.9 L349.5 686.0 L348.6 686.0 L347.7 686.2 L346.8 686.6 L345.9 686.9 L345.0 687.1 L344.1 687.0 L343.2 686.6 L342.3 686.5 L341.4 686.8 L340.5 686.8 L339.6 686.6 L338.7 686.1 L337.8 685.4 L336.9 684.7 L336.0 682.9 L335.1 684.8 L334.2 685.4 L333.3 685.9 L332.4 686.2 L331.5 686.2 L330.6 686.6 L329.7 687.0 L328.8 687.4 L327.9 687.3 L327.0 687.0 L326.1 686.5 L325.2 686.3 L324.3 686.3 L323.4 686.0 L322.5 685.5 L321.6 684.7 L320.7 682.9 L319.8 682.9 L318.9 682.9 L318.0 684.1 L317.1 684.8 L316.2 685.2 L315.3 685.4 L314.4 685.3 L313.5 685.6 L312.6 686.0 L311.7 686.2 L310.8 686.1 L309.9 685.9 L309.0 685.7 L308.1 685.6 L307.2 685.6 L306.3 685.6 L305.4 685.7 L304.5 685.6 L303.6 685.6 L302.7 685.8 L301.8 686.5 L300.9 687.1 L300.0 687.4 L299.1 687.3 L298.2 686.9 L297.3 686.3 L296.4 686.2 L295.5 685.9 L294.6 685.3 L293.7 684.2 L292.8 684.9 L291.9 685.7 L291.0 686.2 L290.1 686.9 L289.2 687.6 L288.3 688.0 L287.4 688.0 L286.5 687.7 L285.6 687.2 L284.7 687.7 L283.8 687.9 L282.9 687.7 L282.0 687.3 L281.1 686.8 L280.2 686.4 L279.3 686.0 L278.4 685.6 L277.5 684.6 L276.6 682.9 L275.7 682.9 L274.8 684.7 L273.9 687.0 L273.0 688.7 L272.1 689.8 L271.2 690.4 L270.3 690.4 L269.4 690.0 L268.5 689.6 L267.6 689.8 L266.7 689.5 L265.8 689.2 L264.9 688.7 L264.0 687.3 L263.1 682.9 L262.2 682.9 L261.3 682.9 L260.4 682.9 L259.5 682.9 L258.6 684.7 L257.7 686.7 L256.8 687.4 L255.9 688.5 L255.0 689.1 L254.1 689.3 L253.2 689.2 L252.3 689.3 L251.4 689.4 L250.5 689.9 L249.6 690.5 L248.7 691.0 L247.8 691.1 L246.9 690.7 L246.0 689.9 L245.1 689.9 L244.2 690.4 L243.3 690.5 L242.4 690.1 L241.5 689.5 L240.6 688.8 L239.7 688.3 L238.8 688.0 L237.9 687.9 L237.0 687.7 L236.1 687.1 L235.2 686.0 L234.3 682.9 L233.4 682.9 L232.5 682.9 L231.6 682.9 L230.7 684.9 L229.8 686.0 L228.9 686.3 L228.0 686.7 L227.1 687.2 L226.2 687.4 L225.3 687.4 L224.4 687.8 L223.5 687.9 L222.6 687.9 L221.7 688.5 L220.8 689.0 L219.9 689.3 L219.0 689.2 L218.1 688.7 L217.2 688.0 L216.3 688.3 L215.4 688.5 L214.5 688.4 L213.6 687.9 L212.7 687.4 L211.8 686.9 L210.9 686.6 L210.0 686.4 L209.1 686.0 L208.2 685.0 L207.3 684.0 L206.4 684.4 L205.5 684.6 L204.6 685.1 L203.7 685.4 L202.8 685.6 L201.9 685.6 L201.0 685.4 L200.1 685.2 L199.2 685.3 L198.3 685.2 L197.4 685.2 L196.5 685.2 L195.6 685.1 L194.7 684.8 L193.8 684.6 L192.9 684.5 L192.0 683.9 L191.1 682.9 L190.2 682.9 L189.3 682.9 L188.4 682.9 L187.5 682.9 L186.6 682.9 L185.7 682.9 L184.8 682.9 L183.9 682.9 L183.0 682.9 L182.1 682.9 L181.2 682.9 L180.3 682.9 L179.4 682.9 L178.5 682.9 L177.6 682.9 L176.7 682.9 L175.8 682.9 L174.9 682.9 L174.0 682.9 L173.1 682.9 L172.2 682.9 L171.3 682.9 L170.4 682.9 L169.5 682.9 L168.6 682.9 L167.7 682.9 L166.8 682.9 L165.9 684.2 L165.0 685.6 L164.1 686.7 L163.2 687.4 L162.3 687.8 L161.4 687.8 L160.5 687.6 L159.6 687.7 L158.7 688.1 L157.8 688.2 L156.9 688.2 L156.0 688.5 L155.1 688.7 L154.2 688.5 L153.3 689.1 L152.4 689.8 L151.5 690.2 L150.6 690.2 L149.7 689.7 L148.8 689.0 L147.9 689.3 L147.0 689.7 L146.1 689.7 L145.2 689.3 L144.3 688.8 L143.4 688.4 L142.5 688.2 L141.6 688.3 L140.7 688.3 L139.8 688.0 L138.9 687.3 L138.0 686.1 L137.1 682.9 L136.2 682.9 L135.3 682.9 L134.4 682.9 L133.5 682.9 L132.6 682.9 L131.7 682.9 L130.8 684.9 L129.9 685.6 L129.0 686.3 L128.1 686.9 L127.2 687.3 L126.3 687.3 L125.4 687.4 L124.5 688.1 L123.6 688.6 L122.7 688.8 L121.8 688.7 L120.9 688.2 L120.0 687.6 L119.1 687.9 L118.2 687.9 L117.3 687.7 L116.4 687.3 L115.5 687.1 L114.6 686.8 L113.7 686.6 L112.8 686.5 L111.9 686.1 L111.0 685.0 L110.1 682.9 L109.2 682.9 L108.3 682.9 L107.4 685.1 L106.5 685.9 L105.6 686.4 L104.7 686.5 L103.8 686.5 L102.9 686.6 L102.0 686.8 L101.1 687.1 L100.2 687.5 L99.3 687.7 L98.4 687.6 L97.5 687.3 L96.6 687.2 L95.7 687.4 L94.8 687.1 L93.9 686.0 L93.0 682.9 L92.1 682.9 L91.2 682.9 L90.3 682.9 L89.4 682.9 L88.5 682.9 L87.6 682.9 L86.7 682.9 L85.8 682.9 L84.9 682.9 L84.0 682.9 L83.1 682.9 L82.2 682.9 L81.3 682.9 L80.4 682.9 L79.5 682.9 L78.6 682.9 L77.7 682.9 L76.8 682.9 L75.9 682.9 L75.0 682.9 L74.1 682.9 L73.2 682.9 L72.3 682.9 L71.4 682.9 L70.5 682.9 L69.6 682.9 L68.7 682.9 L67.8 682.9 L66.9 682.9 L66.0 682.9Z" fill="#8b84ad" clip-path="url(#selc)"/>
<rect x="91.2" y="672" width="4" height="20" rx="2" fill="#b3a9f2" stroke="#7465d8" stroke-width="1"/>
<rect x="507.4" y="672" width="4" height="20" rx="2" fill="#b3a9f2" stroke="#7465d8" stroke-width="1"/>
<g stroke="#bcb9c4" stroke-width="1.3"><path d="M25.4 665.6 H35.4 M28.3 665.6 V664.6 A1.2 1.2 0 0 1 29.5 663.6 H31.3 A1.2 1.2 0 0 1 32.5 664.6 V665.6 M26.4 665.8 L27 673.6 A1.5 1.5 0 0 0 28.5 675 H32.3 A1.5 1.5 0 0 0 33.8 673.6 L34.4 665.8 M29.3 668.6 V672 M31.5 668.6 V672"/></g>
<g stroke="#bcb9c4" stroke-width="1.4"><path d="M26.9 689.6 L30.4 693.3 L33.9 689.6 M26.9 702.3 L30.4 698.6 L33.9 702.3 M24.8 696 H36"/></g>
<rect x="894.6" y="671" width="23" height="23" rx="2.5" fill="#2b2939"/>
<path d="M903.5 676.5 L909 682.5 L903.5 688.5" stroke="#f2f0f6" stroke-width="1.6"/>
<path d="M1044 74.7 H1053.3 M1044 159 H1053.3" stroke="#8d8998" stroke-width="1.6"/>
<rect x="895" y="94.3" width="160.5" height="26" rx="4" fill="#2b2840" stroke="#7a6bd5" stroke-width="1.5"/>
<circle cx="1038.7" cy="107.6" r="3.8" fill="#8c8898"/>
<path d="M894.3 135.7 H1055.8 M894.3 243.1 H1055.8" stroke="#2c2a39" stroke-width="1.2"/>
<rect x="894.2" y="178.9" width="161.8" height="22.6" rx="3" fill="#2c2a3e"/>
<path d="M1035.3 187.6 L1040.6 192.8 L1045.9 187.6" stroke="#bcb9c4" stroke-width="1.4"/>
<rect x="1033.4" y="215" width="22.4" height="11.8" rx="5.9" fill="#2c2a3a"/>
<circle cx="1038.7" cy="220.9" r="4.1" fill="#ffffff"/>
</svg>
<div class="a" style="left:895px;top:66.5px;font-size:12.1px;line-height:16px;font-weight:bold;letter-spacing:0.25px;color:#f1eff5;white-space:nowrap;-webkit-text-stroke:0">TRACKS</div>
<div class="a" style="left:895px;top:151.3px;font-size:12.1px;line-height:16px;font-weight:bold;letter-spacing:0.25px;color:#f1eff5;white-space:nowrap;-webkit-text-stroke:0">SCALE</div>
<div class="a t125" style="left:904.4px;top:100.8px;color:#eeecf2">Lead vocal</div>
<div class="a t125" style="left:901.8px;top:183.8px;color:#eeecf2">F Harmonic Minor</div>
<div class="a t125" style="left:894.6px;top:214.5px;color:#eeecf2">Snap to scale notes</div>
</body></html>
